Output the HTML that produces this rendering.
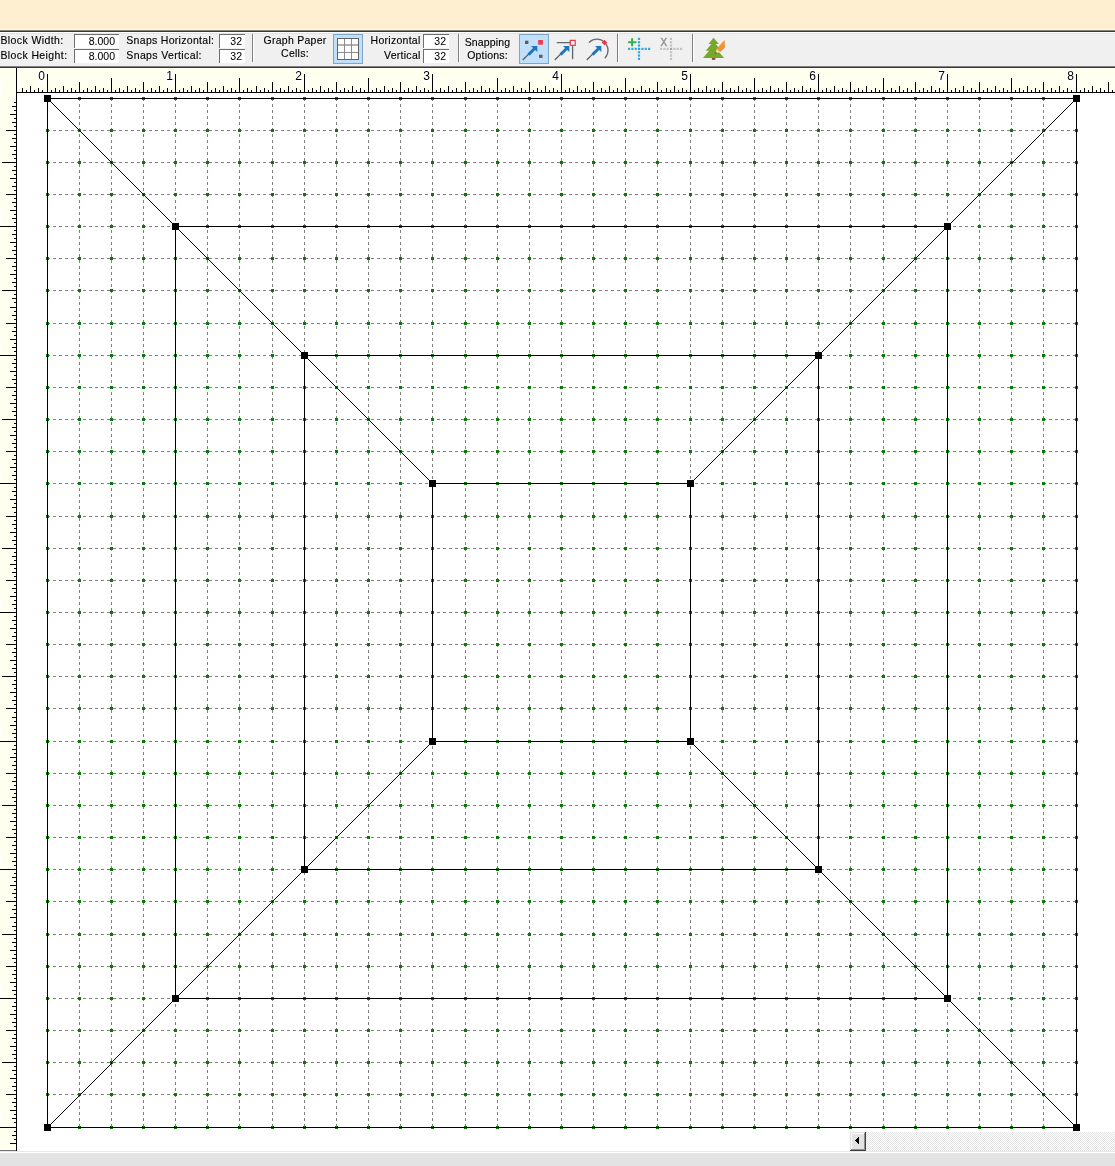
<!DOCTYPE html>
<html lang="en"><head><meta charset="utf-8"><title>Block Worktable</title><style>
html,body{margin:0;padding:0;}
body{width:1115px;height:1166px;overflow:hidden;background:#fff;position:relative;font-family:"Liberation Sans",sans-serif;color:#000;}
.abs{position:absolute;}
.band{left:0;top:0;width:1115px;height:29px;background:#fdefd0;}
.band2{left:0;top:29px;width:1115px;height:1px;background:#fff6d6;}
.l1{left:0;top:30px;width:1115px;height:1px;background:#868684;}
.l2{left:0;top:31px;width:1115px;height:1px;background:#3a3a3a;}
.l3{left:0;top:32px;width:1115px;height:1px;background:#fff;}
.tb{left:0;top:33px;width:1115px;height:33px;background:#f0f0f0;border-top:1px solid #e3e3e3;box-sizing:border-box;}
.l4{left:0;top:66px;width:1115px;height:1px;background:#828282;}
.l5{left:0;top:67px;width:1115px;height:1px;background:#383838;}
.txt{position:absolute;left:0;top:0;width:1115px;height:100px;will-change:transform;}
svg.cv{position:absolute;left:0;top:0;}
svg.ic{position:absolute;left:0;top:0;}
.t{position:absolute;white-space:nowrap;font-size:10.5px;line-height:12px;letter-spacing:0.27px;-webkit-text-stroke:0.14px #000;}
.r{text-align:right;}
.c{text-align:center;}
.in{position:absolute;background:#fff;border-top:1px solid #6e6e6e;border-left:1px solid #6e6e6e;box-sizing:border-box;height:14px;font-size:10.5px;line-height:12px;text-align:right;-webkit-text-stroke:0.05px #000;}
.sep{position:absolute;top:34px;width:1px;height:28px;background:#7e7e7e;}
.seph{position:absolute;top:34px;width:1px;height:28px;background:#fff;}
.btn{position:absolute;top:34px;width:30px;height:30px;box-sizing:border-box;background:#bfdffa;border:1px solid #7fa5c6;}
.rl{position:absolute;top:69px;width:7px;height:14px;font-size:12px;line-height:14px;text-align:right;}
</style></head><body>
<div class="abs band"></div>
<div class="abs band2"></div>
<div class="abs l1"></div>
<div class="abs l2"></div>
<div class="abs l3"></div>
<div class="abs tb"></div>
<div class="abs l4"></div>
<div class="abs l5"></div>
<svg class="cv" width="1115" height="1166" viewBox="0 0 1115 1166" shape-rendering="crispEdges">
<defs><pattern id="chk" width="2" height="2" patternUnits="userSpaceOnUse"><rect width="2" height="2" fill="#fff"/><rect width="1" height="1" fill="#e3e3e3"/><rect x="1" y="1" width="1" height="1" fill="#e3e3e3"/></pattern></defs>
<rect x="0" y="68" width="1115" height="25" fill="#fffff0"/>
<rect x="0" y="93" width="16" height="1058" fill="#fffff0"/>
<rect x="17" y="93" width="1098" height="1058" fill="#fff"/>
<path fill="#000" d="M22 88h1v4h-1zM26 90h1v2h-1zM30 86h1v6h-1zM34 90h1v2h-1zM38 88h1v4h-1zM42 90h1v2h-1zM47 74h1v18h-1zM51 90h1v2h-1zM55 88h1v4h-1zM59 90h1v2h-1zM63 86h1v6h-1zM67 90h1v2h-1zM71 88h1v4h-1zM75 90h1v2h-1zM79 82h1v10h-1zM83 90h1v2h-1zM87 88h1v4h-1zM91 90h1v2h-1zM95 86h1v6h-1zM99 90h1v2h-1zM103 88h1v4h-1zM107 90h1v2h-1zM111 78h1v14h-1zM115 90h1v2h-1zM119 88h1v4h-1zM123 90h1v2h-1zM127 86h1v6h-1zM131 90h1v2h-1zM135 88h1v4h-1zM139 90h1v2h-1zM143 82h1v10h-1zM147 90h1v2h-1zM151 88h1v4h-1zM155 90h1v2h-1zM159 86h1v6h-1zM163 90h1v2h-1zM167 88h1v4h-1zM171 90h1v2h-1zM175 74h1v18h-1zM179 90h1v2h-1zM183 88h1v4h-1zM187 90h1v2h-1zM191 86h1v6h-1zM195 90h1v2h-1zM199 88h1v4h-1zM203 90h1v2h-1zM207 82h1v10h-1zM211 90h1v2h-1zM215 88h1v4h-1zM219 90h1v2h-1zM223 86h1v6h-1zM227 90h1v2h-1zM231 88h1v4h-1zM235 90h1v2h-1zM239 78h1v14h-1zM243 90h1v2h-1zM247 88h1v4h-1zM251 90h1v2h-1zM256 86h1v6h-1zM260 90h1v2h-1zM264 88h1v4h-1zM268 90h1v2h-1zM272 82h1v10h-1zM276 90h1v2h-1zM280 88h1v4h-1zM284 90h1v2h-1zM288 86h1v6h-1zM292 90h1v2h-1zM296 88h1v4h-1zM300 90h1v2h-1zM304 74h1v18h-1zM308 90h1v2h-1zM312 88h1v4h-1zM316 90h1v2h-1zM320 86h1v6h-1zM324 90h1v2h-1zM328 88h1v4h-1zM332 90h1v2h-1zM336 82h1v10h-1zM340 90h1v2h-1zM344 88h1v4h-1zM348 90h1v2h-1zM352 86h1v6h-1zM356 90h1v2h-1zM360 88h1v4h-1zM364 90h1v2h-1zM368 78h1v14h-1zM372 90h1v2h-1zM376 88h1v4h-1zM380 90h1v2h-1zM384 86h1v6h-1zM388 90h1v2h-1zM392 88h1v4h-1zM396 90h1v2h-1zM400 82h1v10h-1zM404 90h1v2h-1zM408 88h1v4h-1zM412 90h1v2h-1zM416 86h1v6h-1zM420 90h1v2h-1zM424 88h1v4h-1zM428 90h1v2h-1zM432 74h1v18h-1zM436 90h1v2h-1zM440 88h1v4h-1zM444 90h1v2h-1zM448 86h1v6h-1zM452 90h1v2h-1zM456 88h1v4h-1zM461 90h1v2h-1zM465 82h1v10h-1zM469 90h1v2h-1zM473 88h1v4h-1zM477 90h1v2h-1zM481 86h1v6h-1zM485 90h1v2h-1zM489 88h1v4h-1zM493 90h1v2h-1zM497 78h1v14h-1zM501 90h1v2h-1zM505 88h1v4h-1zM509 90h1v2h-1zM513 86h1v6h-1zM517 90h1v2h-1zM521 88h1v4h-1zM525 90h1v2h-1zM529 82h1v10h-1zM533 90h1v2h-1zM537 88h1v4h-1zM541 90h1v2h-1zM545 86h1v6h-1zM549 90h1v2h-1zM553 88h1v4h-1zM557 90h1v2h-1zM561 74h1v18h-1zM565 90h1v2h-1zM569 88h1v4h-1zM573 90h1v2h-1zM577 86h1v6h-1zM581 90h1v2h-1zM585 88h1v4h-1zM589 90h1v2h-1zM593 82h1v10h-1zM597 90h1v2h-1zM601 88h1v4h-1zM605 90h1v2h-1zM609 86h1v6h-1zM613 90h1v2h-1zM617 88h1v4h-1zM621 90h1v2h-1zM625 78h1v14h-1zM629 90h1v2h-1zM633 88h1v4h-1zM637 90h1v2h-1zM641 86h1v6h-1zM645 90h1v2h-1zM649 88h1v4h-1zM653 90h1v2h-1zM657 82h1v10h-1zM661 90h1v2h-1zM666 88h1v4h-1zM670 90h1v2h-1zM674 86h1v6h-1zM678 90h1v2h-1zM682 88h1v4h-1zM686 90h1v2h-1zM690 74h1v18h-1zM694 90h1v2h-1zM698 88h1v4h-1zM702 90h1v2h-1zM706 86h1v6h-1zM710 90h1v2h-1zM714 88h1v4h-1zM718 90h1v2h-1zM722 82h1v10h-1zM726 90h1v2h-1zM730 88h1v4h-1zM734 90h1v2h-1zM738 86h1v6h-1zM742 90h1v2h-1zM746 88h1v4h-1zM750 90h1v2h-1zM754 78h1v14h-1zM758 90h1v2h-1zM762 88h1v4h-1zM766 90h1v2h-1zM770 86h1v6h-1zM774 90h1v2h-1zM778 88h1v4h-1zM782 90h1v2h-1zM786 82h1v10h-1zM790 90h1v2h-1zM794 88h1v4h-1zM798 90h1v2h-1zM802 86h1v6h-1zM806 90h1v2h-1zM810 88h1v4h-1zM814 90h1v2h-1zM818 74h1v18h-1zM822 90h1v2h-1zM826 88h1v4h-1zM830 90h1v2h-1zM834 86h1v6h-1zM838 90h1v2h-1zM842 88h1v4h-1zM846 90h1v2h-1zM850 82h1v10h-1zM854 90h1v2h-1zM858 88h1v4h-1zM862 90h1v2h-1zM866 86h1v6h-1zM871 90h1v2h-1zM875 88h1v4h-1zM879 90h1v2h-1zM883 78h1v14h-1zM887 90h1v2h-1zM891 88h1v4h-1zM895 90h1v2h-1zM899 86h1v6h-1zM903 90h1v2h-1zM907 88h1v4h-1zM911 90h1v2h-1zM915 82h1v10h-1zM919 90h1v2h-1zM923 88h1v4h-1zM927 90h1v2h-1zM931 86h1v6h-1zM935 90h1v2h-1zM939 88h1v4h-1zM943 90h1v2h-1zM947 74h1v18h-1zM951 90h1v2h-1zM955 88h1v4h-1zM959 90h1v2h-1zM963 86h1v6h-1zM967 90h1v2h-1zM971 88h1v4h-1zM975 90h1v2h-1zM979 82h1v10h-1zM983 90h1v2h-1zM987 88h1v4h-1zM991 90h1v2h-1zM995 86h1v6h-1zM999 90h1v2h-1zM1003 88h1v4h-1zM1007 90h1v2h-1zM1011 78h1v14h-1zM1015 90h1v2h-1zM1019 88h1v4h-1zM1023 90h1v2h-1zM1027 86h1v6h-1zM1031 90h1v2h-1zM1035 88h1v4h-1zM1039 90h1v2h-1zM1043 82h1v10h-1zM1047 90h1v2h-1zM1051 88h1v4h-1zM1055 90h1v2h-1zM1059 86h1v6h-1zM1063 90h1v2h-1zM1067 88h1v4h-1zM1071 90h1v2h-1zM1076 74h1v18h-1zM1080 90h1v2h-1zM1084 88h1v4h-1zM1088 90h1v2h-1zM1092 86h1v6h-1zM1096 90h1v2h-1zM1100 88h1v4h-1zM1104 90h1v2h-1zM1108 82h1v10h-1zM1112 90h1v2h-1zM14 102h2v1h-2zM12 106h4v1h-4zM14 110h2v1h-2zM10 114h6v1h-6zM14 118h2v1h-2zM12 122h4v1h-4zM14 126h2v1h-2zM6 130h10v1h-10zM14 134h2v1h-2zM12 138h4v1h-4zM14 142h2v1h-2zM10 146h6v1h-6zM14 150h2v1h-2zM12 154h4v1h-4zM14 158h2v1h-2zM2 162h14v1h-14zM14 166h2v1h-2zM12 170h4v1h-4zM14 174h2v1h-2zM10 178h6v1h-6zM14 182h2v1h-2zM12 186h4v1h-4zM14 190h2v1h-2zM6 194h10v1h-10zM14 198h2v1h-2zM12 202h4v1h-4zM14 206h2v1h-2zM10 210h6v1h-6zM14 214h2v1h-2zM12 218h4v1h-4zM14 222h2v1h-2zM0 226h16v1h-16zM14 230h2v1h-2zM12 234h4v1h-4zM14 238h2v1h-2zM10 242h6v1h-6zM14 246h2v1h-2zM12 250h4v1h-4zM14 254h2v1h-2zM6 258h10v1h-10zM14 262h2v1h-2zM12 266h4v1h-4zM14 270h2v1h-2zM10 274h6v1h-6zM14 278h2v1h-2zM12 282h4v1h-4zM14 286h2v1h-2zM2 290h14v1h-14zM14 294h2v1h-2zM12 298h4v1h-4zM14 302h2v1h-2zM10 307h6v1h-6zM14 311h2v1h-2zM12 315h4v1h-4zM14 319h2v1h-2zM6 323h10v1h-10zM14 327h2v1h-2zM12 331h4v1h-4zM14 335h2v1h-2zM10 339h6v1h-6zM14 343h2v1h-2zM12 347h4v1h-4zM14 351h2v1h-2zM0 355h16v1h-16zM14 359h2v1h-2zM12 363h4v1h-4zM14 367h2v1h-2zM10 371h6v1h-6zM14 375h2v1h-2zM12 379h4v1h-4zM14 383h2v1h-2zM6 387h10v1h-10zM14 391h2v1h-2zM12 395h4v1h-4zM14 399h2v1h-2zM10 403h6v1h-6zM14 407h2v1h-2zM12 411h4v1h-4zM14 415h2v1h-2zM2 419h14v1h-14zM14 423h2v1h-2zM12 427h4v1h-4zM14 431h2v1h-2zM10 435h6v1h-6zM14 439h2v1h-2zM12 443h4v1h-4zM14 447h2v1h-2zM6 451h10v1h-10zM14 455h2v1h-2zM12 459h4v1h-4zM14 463h2v1h-2zM10 467h6v1h-6zM14 471h2v1h-2zM12 475h4v1h-4zM14 479h2v1h-2zM0 483h16v1h-16zM14 487h2v1h-2zM12 491h4v1h-4zM14 495h2v1h-2zM10 499h6v1h-6zM14 503h2v1h-2zM12 507h4v1h-4zM14 512h2v1h-2zM6 516h10v1h-10zM14 520h2v1h-2zM12 524h4v1h-4zM14 528h2v1h-2zM10 532h6v1h-6zM14 536h2v1h-2zM12 540h4v1h-4zM14 544h2v1h-2zM2 548h14v1h-14zM14 552h2v1h-2zM12 556h4v1h-4zM14 560h2v1h-2zM10 564h6v1h-6zM14 568h2v1h-2zM12 572h4v1h-4zM14 576h2v1h-2zM6 580h10v1h-10zM14 584h2v1h-2zM12 588h4v1h-4zM14 592h2v1h-2zM10 596h6v1h-6zM14 600h2v1h-2zM12 604h4v1h-4zM14 608h2v1h-2zM0 612h16v1h-16zM14 616h2v1h-2zM12 620h4v1h-4zM14 624h2v1h-2zM10 628h6v1h-6zM14 632h2v1h-2zM12 636h4v1h-4zM14 640h2v1h-2zM6 644h10v1h-10zM14 648h2v1h-2zM12 652h4v1h-4zM14 656h2v1h-2zM10 660h6v1h-6zM14 664h2v1h-2zM12 668h4v1h-4zM14 672h2v1h-2zM2 676h14v1h-14zM14 680h2v1h-2zM12 684h4v1h-4zM14 688h2v1h-2zM10 692h6v1h-6zM14 696h2v1h-2zM12 700h4v1h-4zM14 704h2v1h-2zM6 708h10v1h-10zM14 712h2v1h-2zM12 717h4v1h-4zM14 721h2v1h-2zM10 725h6v1h-6zM14 729h2v1h-2zM12 733h4v1h-4zM14 737h2v1h-2zM0 741h16v1h-16zM14 745h2v1h-2zM12 749h4v1h-4zM14 753h2v1h-2zM10 757h6v1h-6zM14 761h2v1h-2zM12 765h4v1h-4zM14 769h2v1h-2zM6 773h10v1h-10zM14 777h2v1h-2zM12 781h4v1h-4zM14 785h2v1h-2zM10 789h6v1h-6zM14 793h2v1h-2zM12 797h4v1h-4zM14 801h2v1h-2zM2 805h14v1h-14zM14 809h2v1h-2zM12 813h4v1h-4zM14 817h2v1h-2zM10 821h6v1h-6zM14 825h2v1h-2zM12 829h4v1h-4zM14 833h2v1h-2zM6 837h10v1h-10zM14 841h2v1h-2zM12 845h4v1h-4zM14 849h2v1h-2zM10 853h6v1h-6zM14 857h2v1h-2zM12 861h4v1h-4zM14 865h2v1h-2zM0 869h16v1h-16zM14 873h2v1h-2zM12 877h4v1h-4zM14 881h2v1h-2zM10 885h6v1h-6zM14 889h2v1h-2zM12 893h4v1h-4zM14 897h2v1h-2zM6 901h10v1h-10zM14 905h2v1h-2zM12 909h4v1h-4zM14 913h2v1h-2zM10 917h6v1h-6zM14 922h2v1h-2zM12 926h4v1h-4zM14 930h2v1h-2zM2 934h14v1h-14zM14 938h2v1h-2zM12 942h4v1h-4zM14 946h2v1h-2zM10 950h6v1h-6zM14 954h2v1h-2zM12 958h4v1h-4zM14 962h2v1h-2zM6 966h10v1h-10zM14 970h2v1h-2zM12 974h4v1h-4zM14 978h2v1h-2zM10 982h6v1h-6zM14 986h2v1h-2zM12 990h4v1h-4zM14 994h2v1h-2zM0 998h16v1h-16zM14 1002h2v1h-2zM12 1006h4v1h-4zM14 1010h2v1h-2zM10 1014h6v1h-6zM14 1018h2v1h-2zM12 1022h4v1h-4zM14 1026h2v1h-2zM6 1030h10v1h-10zM14 1034h2v1h-2zM12 1038h4v1h-4zM14 1042h2v1h-2zM10 1046h6v1h-6zM14 1050h2v1h-2zM12 1054h4v1h-4zM14 1058h2v1h-2zM2 1062h14v1h-14zM14 1066h2v1h-2zM12 1070h4v1h-4zM14 1074h2v1h-2zM10 1078h6v1h-6zM14 1082h2v1h-2zM12 1086h4v1h-4zM14 1090h2v1h-2zM6 1094h10v1h-10zM14 1098h2v1h-2zM12 1102h4v1h-4zM14 1106h2v1h-2zM10 1110h6v1h-6zM14 1114h2v1h-2zM12 1118h4v1h-4zM14 1122h2v1h-2zM0 1127h16v1h-16zM14 1131h2v1h-2zM12 1135h4v1h-4zM14 1139h2v1h-2zM10 1143h6v1h-6z"/>
<rect x="16" y="92" width="1099" height="1" fill="#000"/>
<rect x="16" y="68" width="1" height="1083" fill="#000"/>
<rect x="0" y="1150" width="16" height="1" fill="#707070"/>
<rect x="38" y="69" width="7" height="14" fill="#fff"/>
<rect x="166" y="69" width="7" height="14" fill="#fff"/>
<rect x="295" y="69" width="7" height="14" fill="#fff"/>
<rect x="423" y="69" width="7" height="14" fill="#fff"/>
<rect x="552" y="69" width="7" height="14" fill="#fff"/>
<rect x="681" y="69" width="7" height="14" fill="#fff"/>
<rect x="809" y="69" width="7" height="14" fill="#fff"/>
<rect x="938" y="69" width="7" height="14" fill="#fff"/>
<rect x="1067" y="69" width="7" height="14" fill="#fff"/>
<rect x="0" y="82" width="1" height="14" fill="#fff"/>
<rect x="0" y="210" width="1" height="14" fill="#fff"/>
<rect x="0" y="339" width="1" height="14" fill="#fff"/>
<rect x="0" y="467" width="1" height="14" fill="#fff"/>
<rect x="0" y="596" width="1" height="14" fill="#fff"/>
<rect x="0" y="725" width="1" height="14" fill="#fff"/>
<rect x="0" y="853" width="1" height="14" fill="#fff"/>
<rect x="0" y="982" width="1" height="14" fill="#fff"/>
<rect x="0" y="1111" width="1" height="14" fill="#fff"/>
<rect x="0" y="98" width="16" height="1" fill="#fffff8"/>
<path fill="none" stroke="#808080" stroke-width="1" stroke-dasharray="3 3" d="M79.5 98V1128M47 130.5H1077M111.5 98V1128M47 162.5H1077M143.5 98V1128M47 194.5H1077M175.5 98V1128M47 226.5H1077M207.5 98V1128M47 258.5H1077M239.5 98V1128M47 290.5H1077M272.5 98V1128M47 323.5H1077M304.5 98V1128M47 355.5H1077M336.5 98V1128M47 387.5H1077M368.5 98V1128M47 419.5H1077M400.5 98V1128M47 451.5H1077M432.5 98V1128M47 483.5H1077M465.5 98V1128M47 516.5H1077M497.5 98V1128M47 548.5H1077M529.5 98V1128M47 580.5H1077M561.5 98V1128M47 612.5H1077M593.5 98V1128M47 644.5H1077M625.5 98V1128M47 676.5H1077M657.5 98V1128M47 708.5H1077M690.5 98V1128M47 741.5H1077M722.5 98V1128M47 773.5H1077M754.5 98V1128M47 805.5H1077M786.5 98V1128M47 837.5H1077M818.5 98V1128M47 869.5H1077M850.5 98V1128M47 901.5H1077M883.5 98V1128M47 934.5H1077M915.5 98V1128M47 966.5H1077M947.5 98V1128M47 998.5H1077M979.5 98V1128M47 1030.5H1077M1011.5 98V1128M47 1062.5H1077M1043.5 98V1128M47 1094.5H1077"/>
<path fill="#077a07" d="M46 129h3v3h-3zM46 161h3v3h-3zM46 193h3v3h-3zM46 225h3v3h-3zM46 257h3v3h-3zM46 289h3v3h-3zM46 322h3v3h-3zM46 354h3v3h-3zM46 386h3v3h-3zM46 418h3v3h-3zM46 450h3v3h-3zM46 482h3v3h-3zM46 515h3v3h-3zM46 547h3v3h-3zM46 579h3v3h-3zM46 611h3v3h-3zM46 643h3v3h-3zM46 675h3v3h-3zM46 707h3v3h-3zM46 740h3v3h-3zM46 772h3v3h-3zM46 804h3v3h-3zM46 836h3v3h-3zM46 868h3v3h-3zM46 900h3v3h-3zM46 933h3v3h-3zM46 965h3v3h-3zM46 997h3v3h-3zM46 1029h3v3h-3zM46 1061h3v3h-3zM46 1093h3v3h-3zM78 97h3v3h-3zM78 129h3v3h-3zM78 161h3v3h-3zM78 193h3v3h-3zM78 225h3v3h-3zM78 257h3v3h-3zM78 289h3v3h-3zM78 322h3v3h-3zM78 354h3v3h-3zM78 386h3v3h-3zM78 418h3v3h-3zM78 450h3v3h-3zM78 482h3v3h-3zM78 515h3v3h-3zM78 547h3v3h-3zM78 579h3v3h-3zM78 611h3v3h-3zM78 643h3v3h-3zM78 675h3v3h-3zM78 707h3v3h-3zM78 740h3v3h-3zM78 772h3v3h-3zM78 804h3v3h-3zM78 836h3v3h-3zM78 868h3v3h-3zM78 900h3v3h-3zM78 933h3v3h-3zM78 965h3v3h-3zM78 997h3v3h-3zM78 1029h3v3h-3zM78 1061h3v3h-3zM78 1093h3v3h-3zM78 1126h3v3h-3zM110 97h3v3h-3zM110 129h3v3h-3zM110 161h3v3h-3zM110 193h3v3h-3zM110 225h3v3h-3zM110 257h3v3h-3zM110 289h3v3h-3zM110 322h3v3h-3zM110 354h3v3h-3zM110 386h3v3h-3zM110 418h3v3h-3zM110 450h3v3h-3zM110 482h3v3h-3zM110 515h3v3h-3zM110 547h3v3h-3zM110 579h3v3h-3zM110 611h3v3h-3zM110 643h3v3h-3zM110 675h3v3h-3zM110 707h3v3h-3zM110 740h3v3h-3zM110 772h3v3h-3zM110 804h3v3h-3zM110 836h3v3h-3zM110 868h3v3h-3zM110 900h3v3h-3zM110 933h3v3h-3zM110 965h3v3h-3zM110 997h3v3h-3zM110 1029h3v3h-3zM110 1061h3v3h-3zM110 1093h3v3h-3zM110 1126h3v3h-3zM142 97h3v3h-3zM142 129h3v3h-3zM142 161h3v3h-3zM142 193h3v3h-3zM142 225h3v3h-3zM142 257h3v3h-3zM142 289h3v3h-3zM142 322h3v3h-3zM142 354h3v3h-3zM142 386h3v3h-3zM142 418h3v3h-3zM142 450h3v3h-3zM142 482h3v3h-3zM142 515h3v3h-3zM142 547h3v3h-3zM142 579h3v3h-3zM142 611h3v3h-3zM142 643h3v3h-3zM142 675h3v3h-3zM142 707h3v3h-3zM142 740h3v3h-3zM142 772h3v3h-3zM142 804h3v3h-3zM142 836h3v3h-3zM142 868h3v3h-3zM142 900h3v3h-3zM142 933h3v3h-3zM142 965h3v3h-3zM142 997h3v3h-3zM142 1029h3v3h-3zM142 1061h3v3h-3zM142 1093h3v3h-3zM142 1126h3v3h-3zM174 97h3v3h-3zM174 129h3v3h-3zM174 161h3v3h-3zM174 193h3v3h-3zM174 225h3v3h-3zM174 257h3v3h-3zM174 289h3v3h-3zM174 322h3v3h-3zM174 354h3v3h-3zM174 386h3v3h-3zM174 418h3v3h-3zM174 450h3v3h-3zM174 482h3v3h-3zM174 515h3v3h-3zM174 547h3v3h-3zM174 579h3v3h-3zM174 611h3v3h-3zM174 643h3v3h-3zM174 675h3v3h-3zM174 707h3v3h-3zM174 740h3v3h-3zM174 772h3v3h-3zM174 804h3v3h-3zM174 836h3v3h-3zM174 868h3v3h-3zM174 900h3v3h-3zM174 933h3v3h-3zM174 965h3v3h-3zM174 997h3v3h-3zM174 1029h3v3h-3zM174 1061h3v3h-3zM174 1093h3v3h-3zM174 1126h3v3h-3zM206 97h3v3h-3zM206 129h3v3h-3zM206 161h3v3h-3zM206 193h3v3h-3zM206 225h3v3h-3zM206 257h3v3h-3zM206 289h3v3h-3zM206 322h3v3h-3zM206 354h3v3h-3zM206 386h3v3h-3zM206 418h3v3h-3zM206 450h3v3h-3zM206 482h3v3h-3zM206 515h3v3h-3zM206 547h3v3h-3zM206 579h3v3h-3zM206 611h3v3h-3zM206 643h3v3h-3zM206 675h3v3h-3zM206 707h3v3h-3zM206 740h3v3h-3zM206 772h3v3h-3zM206 804h3v3h-3zM206 836h3v3h-3zM206 868h3v3h-3zM206 900h3v3h-3zM206 933h3v3h-3zM206 965h3v3h-3zM206 997h3v3h-3zM206 1029h3v3h-3zM206 1061h3v3h-3zM206 1093h3v3h-3zM206 1126h3v3h-3zM238 97h3v3h-3zM238 129h3v3h-3zM238 161h3v3h-3zM238 193h3v3h-3zM238 225h3v3h-3zM238 257h3v3h-3zM238 289h3v3h-3zM238 322h3v3h-3zM238 354h3v3h-3zM238 386h3v3h-3zM238 418h3v3h-3zM238 450h3v3h-3zM238 482h3v3h-3zM238 515h3v3h-3zM238 547h3v3h-3zM238 579h3v3h-3zM238 611h3v3h-3zM238 643h3v3h-3zM238 675h3v3h-3zM238 707h3v3h-3zM238 740h3v3h-3zM238 772h3v3h-3zM238 804h3v3h-3zM238 836h3v3h-3zM238 868h3v3h-3zM238 900h3v3h-3zM238 933h3v3h-3zM238 965h3v3h-3zM238 997h3v3h-3zM238 1029h3v3h-3zM238 1061h3v3h-3zM238 1093h3v3h-3zM238 1126h3v3h-3zM271 97h3v3h-3zM271 129h3v3h-3zM271 161h3v3h-3zM271 193h3v3h-3zM271 225h3v3h-3zM271 257h3v3h-3zM271 289h3v3h-3zM271 322h3v3h-3zM271 354h3v3h-3zM271 386h3v3h-3zM271 418h3v3h-3zM271 450h3v3h-3zM271 482h3v3h-3zM271 515h3v3h-3zM271 547h3v3h-3zM271 579h3v3h-3zM271 611h3v3h-3zM271 643h3v3h-3zM271 675h3v3h-3zM271 707h3v3h-3zM271 740h3v3h-3zM271 772h3v3h-3zM271 804h3v3h-3zM271 836h3v3h-3zM271 868h3v3h-3zM271 900h3v3h-3zM271 933h3v3h-3zM271 965h3v3h-3zM271 997h3v3h-3zM271 1029h3v3h-3zM271 1061h3v3h-3zM271 1093h3v3h-3zM271 1126h3v3h-3zM303 97h3v3h-3zM303 129h3v3h-3zM303 161h3v3h-3zM303 193h3v3h-3zM303 225h3v3h-3zM303 257h3v3h-3zM303 289h3v3h-3zM303 322h3v3h-3zM303 354h3v3h-3zM303 386h3v3h-3zM303 418h3v3h-3zM303 450h3v3h-3zM303 482h3v3h-3zM303 515h3v3h-3zM303 547h3v3h-3zM303 579h3v3h-3zM303 611h3v3h-3zM303 643h3v3h-3zM303 675h3v3h-3zM303 707h3v3h-3zM303 740h3v3h-3zM303 772h3v3h-3zM303 804h3v3h-3zM303 836h3v3h-3zM303 868h3v3h-3zM303 900h3v3h-3zM303 933h3v3h-3zM303 965h3v3h-3zM303 997h3v3h-3zM303 1029h3v3h-3zM303 1061h3v3h-3zM303 1093h3v3h-3zM303 1126h3v3h-3zM335 97h3v3h-3zM335 129h3v3h-3zM335 161h3v3h-3zM335 193h3v3h-3zM335 225h3v3h-3zM335 257h3v3h-3zM335 289h3v3h-3zM335 322h3v3h-3zM335 354h3v3h-3zM335 386h3v3h-3zM335 418h3v3h-3zM335 450h3v3h-3zM335 482h3v3h-3zM335 515h3v3h-3zM335 547h3v3h-3zM335 579h3v3h-3zM335 611h3v3h-3zM335 643h3v3h-3zM335 675h3v3h-3zM335 707h3v3h-3zM335 740h3v3h-3zM335 772h3v3h-3zM335 804h3v3h-3zM335 836h3v3h-3zM335 868h3v3h-3zM335 900h3v3h-3zM335 933h3v3h-3zM335 965h3v3h-3zM335 997h3v3h-3zM335 1029h3v3h-3zM335 1061h3v3h-3zM335 1093h3v3h-3zM335 1126h3v3h-3zM367 97h3v3h-3zM367 129h3v3h-3zM367 161h3v3h-3zM367 193h3v3h-3zM367 225h3v3h-3zM367 257h3v3h-3zM367 289h3v3h-3zM367 322h3v3h-3zM367 354h3v3h-3zM367 386h3v3h-3zM367 418h3v3h-3zM367 450h3v3h-3zM367 482h3v3h-3zM367 515h3v3h-3zM367 547h3v3h-3zM367 579h3v3h-3zM367 611h3v3h-3zM367 643h3v3h-3zM367 675h3v3h-3zM367 707h3v3h-3zM367 740h3v3h-3zM367 772h3v3h-3zM367 804h3v3h-3zM367 836h3v3h-3zM367 868h3v3h-3zM367 900h3v3h-3zM367 933h3v3h-3zM367 965h3v3h-3zM367 997h3v3h-3zM367 1029h3v3h-3zM367 1061h3v3h-3zM367 1093h3v3h-3zM367 1126h3v3h-3zM399 97h3v3h-3zM399 129h3v3h-3zM399 161h3v3h-3zM399 193h3v3h-3zM399 225h3v3h-3zM399 257h3v3h-3zM399 289h3v3h-3zM399 322h3v3h-3zM399 354h3v3h-3zM399 386h3v3h-3zM399 418h3v3h-3zM399 450h3v3h-3zM399 482h3v3h-3zM399 515h3v3h-3zM399 547h3v3h-3zM399 579h3v3h-3zM399 611h3v3h-3zM399 643h3v3h-3zM399 675h3v3h-3zM399 707h3v3h-3zM399 740h3v3h-3zM399 772h3v3h-3zM399 804h3v3h-3zM399 836h3v3h-3zM399 868h3v3h-3zM399 900h3v3h-3zM399 933h3v3h-3zM399 965h3v3h-3zM399 997h3v3h-3zM399 1029h3v3h-3zM399 1061h3v3h-3zM399 1093h3v3h-3zM399 1126h3v3h-3zM431 97h3v3h-3zM431 129h3v3h-3zM431 161h3v3h-3zM431 193h3v3h-3zM431 225h3v3h-3zM431 257h3v3h-3zM431 289h3v3h-3zM431 322h3v3h-3zM431 354h3v3h-3zM431 386h3v3h-3zM431 418h3v3h-3zM431 450h3v3h-3zM431 482h3v3h-3zM431 515h3v3h-3zM431 547h3v3h-3zM431 579h3v3h-3zM431 611h3v3h-3zM431 643h3v3h-3zM431 675h3v3h-3zM431 707h3v3h-3zM431 740h3v3h-3zM431 772h3v3h-3zM431 804h3v3h-3zM431 836h3v3h-3zM431 868h3v3h-3zM431 900h3v3h-3zM431 933h3v3h-3zM431 965h3v3h-3zM431 997h3v3h-3zM431 1029h3v3h-3zM431 1061h3v3h-3zM431 1093h3v3h-3zM431 1126h3v3h-3zM464 97h3v3h-3zM464 129h3v3h-3zM464 161h3v3h-3zM464 193h3v3h-3zM464 225h3v3h-3zM464 257h3v3h-3zM464 289h3v3h-3zM464 322h3v3h-3zM464 354h3v3h-3zM464 386h3v3h-3zM464 418h3v3h-3zM464 450h3v3h-3zM464 482h3v3h-3zM464 515h3v3h-3zM464 547h3v3h-3zM464 579h3v3h-3zM464 611h3v3h-3zM464 643h3v3h-3zM464 675h3v3h-3zM464 707h3v3h-3zM464 740h3v3h-3zM464 772h3v3h-3zM464 804h3v3h-3zM464 836h3v3h-3zM464 868h3v3h-3zM464 900h3v3h-3zM464 933h3v3h-3zM464 965h3v3h-3zM464 997h3v3h-3zM464 1029h3v3h-3zM464 1061h3v3h-3zM464 1093h3v3h-3zM464 1126h3v3h-3zM496 97h3v3h-3zM496 129h3v3h-3zM496 161h3v3h-3zM496 193h3v3h-3zM496 225h3v3h-3zM496 257h3v3h-3zM496 289h3v3h-3zM496 322h3v3h-3zM496 354h3v3h-3zM496 386h3v3h-3zM496 418h3v3h-3zM496 450h3v3h-3zM496 482h3v3h-3zM496 515h3v3h-3zM496 547h3v3h-3zM496 579h3v3h-3zM496 611h3v3h-3zM496 643h3v3h-3zM496 675h3v3h-3zM496 707h3v3h-3zM496 740h3v3h-3zM496 772h3v3h-3zM496 804h3v3h-3zM496 836h3v3h-3zM496 868h3v3h-3zM496 900h3v3h-3zM496 933h3v3h-3zM496 965h3v3h-3zM496 997h3v3h-3zM496 1029h3v3h-3zM496 1061h3v3h-3zM496 1093h3v3h-3zM496 1126h3v3h-3zM528 97h3v3h-3zM528 129h3v3h-3zM528 161h3v3h-3zM528 193h3v3h-3zM528 225h3v3h-3zM528 257h3v3h-3zM528 289h3v3h-3zM528 322h3v3h-3zM528 354h3v3h-3zM528 386h3v3h-3zM528 418h3v3h-3zM528 450h3v3h-3zM528 482h3v3h-3zM528 515h3v3h-3zM528 547h3v3h-3zM528 579h3v3h-3zM528 611h3v3h-3zM528 643h3v3h-3zM528 675h3v3h-3zM528 707h3v3h-3zM528 740h3v3h-3zM528 772h3v3h-3zM528 804h3v3h-3zM528 836h3v3h-3zM528 868h3v3h-3zM528 900h3v3h-3zM528 933h3v3h-3zM528 965h3v3h-3zM528 997h3v3h-3zM528 1029h3v3h-3zM528 1061h3v3h-3zM528 1093h3v3h-3zM528 1126h3v3h-3zM560 97h3v3h-3zM560 129h3v3h-3zM560 161h3v3h-3zM560 193h3v3h-3zM560 225h3v3h-3zM560 257h3v3h-3zM560 289h3v3h-3zM560 322h3v3h-3zM560 354h3v3h-3zM560 386h3v3h-3zM560 418h3v3h-3zM560 450h3v3h-3zM560 482h3v3h-3zM560 515h3v3h-3zM560 547h3v3h-3zM560 579h3v3h-3zM560 611h3v3h-3zM560 643h3v3h-3zM560 675h3v3h-3zM560 707h3v3h-3zM560 740h3v3h-3zM560 772h3v3h-3zM560 804h3v3h-3zM560 836h3v3h-3zM560 868h3v3h-3zM560 900h3v3h-3zM560 933h3v3h-3zM560 965h3v3h-3zM560 997h3v3h-3zM560 1029h3v3h-3zM560 1061h3v3h-3zM560 1093h3v3h-3zM560 1126h3v3h-3zM592 97h3v3h-3zM592 129h3v3h-3zM592 161h3v3h-3zM592 193h3v3h-3zM592 225h3v3h-3zM592 257h3v3h-3zM592 289h3v3h-3zM592 322h3v3h-3zM592 354h3v3h-3zM592 386h3v3h-3zM592 418h3v3h-3zM592 450h3v3h-3zM592 482h3v3h-3zM592 515h3v3h-3zM592 547h3v3h-3zM592 579h3v3h-3zM592 611h3v3h-3zM592 643h3v3h-3zM592 675h3v3h-3zM592 707h3v3h-3zM592 740h3v3h-3zM592 772h3v3h-3zM592 804h3v3h-3zM592 836h3v3h-3zM592 868h3v3h-3zM592 900h3v3h-3zM592 933h3v3h-3zM592 965h3v3h-3zM592 997h3v3h-3zM592 1029h3v3h-3zM592 1061h3v3h-3zM592 1093h3v3h-3zM592 1126h3v3h-3zM624 97h3v3h-3zM624 129h3v3h-3zM624 161h3v3h-3zM624 193h3v3h-3zM624 225h3v3h-3zM624 257h3v3h-3zM624 289h3v3h-3zM624 322h3v3h-3zM624 354h3v3h-3zM624 386h3v3h-3zM624 418h3v3h-3zM624 450h3v3h-3zM624 482h3v3h-3zM624 515h3v3h-3zM624 547h3v3h-3zM624 579h3v3h-3zM624 611h3v3h-3zM624 643h3v3h-3zM624 675h3v3h-3zM624 707h3v3h-3zM624 740h3v3h-3zM624 772h3v3h-3zM624 804h3v3h-3zM624 836h3v3h-3zM624 868h3v3h-3zM624 900h3v3h-3zM624 933h3v3h-3zM624 965h3v3h-3zM624 997h3v3h-3zM624 1029h3v3h-3zM624 1061h3v3h-3zM624 1093h3v3h-3zM624 1126h3v3h-3zM656 97h3v3h-3zM656 129h3v3h-3zM656 161h3v3h-3zM656 193h3v3h-3zM656 225h3v3h-3zM656 257h3v3h-3zM656 289h3v3h-3zM656 322h3v3h-3zM656 354h3v3h-3zM656 386h3v3h-3zM656 418h3v3h-3zM656 450h3v3h-3zM656 482h3v3h-3zM656 515h3v3h-3zM656 547h3v3h-3zM656 579h3v3h-3zM656 611h3v3h-3zM656 643h3v3h-3zM656 675h3v3h-3zM656 707h3v3h-3zM656 740h3v3h-3zM656 772h3v3h-3zM656 804h3v3h-3zM656 836h3v3h-3zM656 868h3v3h-3zM656 900h3v3h-3zM656 933h3v3h-3zM656 965h3v3h-3zM656 997h3v3h-3zM656 1029h3v3h-3zM656 1061h3v3h-3zM656 1093h3v3h-3zM656 1126h3v3h-3zM689 97h3v3h-3zM689 129h3v3h-3zM689 161h3v3h-3zM689 193h3v3h-3zM689 225h3v3h-3zM689 257h3v3h-3zM689 289h3v3h-3zM689 322h3v3h-3zM689 354h3v3h-3zM689 386h3v3h-3zM689 418h3v3h-3zM689 450h3v3h-3zM689 482h3v3h-3zM689 515h3v3h-3zM689 547h3v3h-3zM689 579h3v3h-3zM689 611h3v3h-3zM689 643h3v3h-3zM689 675h3v3h-3zM689 707h3v3h-3zM689 740h3v3h-3zM689 772h3v3h-3zM689 804h3v3h-3zM689 836h3v3h-3zM689 868h3v3h-3zM689 900h3v3h-3zM689 933h3v3h-3zM689 965h3v3h-3zM689 997h3v3h-3zM689 1029h3v3h-3zM689 1061h3v3h-3zM689 1093h3v3h-3zM689 1126h3v3h-3zM721 97h3v3h-3zM721 129h3v3h-3zM721 161h3v3h-3zM721 193h3v3h-3zM721 225h3v3h-3zM721 257h3v3h-3zM721 289h3v3h-3zM721 322h3v3h-3zM721 354h3v3h-3zM721 386h3v3h-3zM721 418h3v3h-3zM721 450h3v3h-3zM721 482h3v3h-3zM721 515h3v3h-3zM721 547h3v3h-3zM721 579h3v3h-3zM721 611h3v3h-3zM721 643h3v3h-3zM721 675h3v3h-3zM721 707h3v3h-3zM721 740h3v3h-3zM721 772h3v3h-3zM721 804h3v3h-3zM721 836h3v3h-3zM721 868h3v3h-3zM721 900h3v3h-3zM721 933h3v3h-3zM721 965h3v3h-3zM721 997h3v3h-3zM721 1029h3v3h-3zM721 1061h3v3h-3zM721 1093h3v3h-3zM721 1126h3v3h-3zM753 97h3v3h-3zM753 129h3v3h-3zM753 161h3v3h-3zM753 193h3v3h-3zM753 225h3v3h-3zM753 257h3v3h-3zM753 289h3v3h-3zM753 322h3v3h-3zM753 354h3v3h-3zM753 386h3v3h-3zM753 418h3v3h-3zM753 450h3v3h-3zM753 482h3v3h-3zM753 515h3v3h-3zM753 547h3v3h-3zM753 579h3v3h-3zM753 611h3v3h-3zM753 643h3v3h-3zM753 675h3v3h-3zM753 707h3v3h-3zM753 740h3v3h-3zM753 772h3v3h-3zM753 804h3v3h-3zM753 836h3v3h-3zM753 868h3v3h-3zM753 900h3v3h-3zM753 933h3v3h-3zM753 965h3v3h-3zM753 997h3v3h-3zM753 1029h3v3h-3zM753 1061h3v3h-3zM753 1093h3v3h-3zM753 1126h3v3h-3zM785 97h3v3h-3zM785 129h3v3h-3zM785 161h3v3h-3zM785 193h3v3h-3zM785 225h3v3h-3zM785 257h3v3h-3zM785 289h3v3h-3zM785 322h3v3h-3zM785 354h3v3h-3zM785 386h3v3h-3zM785 418h3v3h-3zM785 450h3v3h-3zM785 482h3v3h-3zM785 515h3v3h-3zM785 547h3v3h-3zM785 579h3v3h-3zM785 611h3v3h-3zM785 643h3v3h-3zM785 675h3v3h-3zM785 707h3v3h-3zM785 740h3v3h-3zM785 772h3v3h-3zM785 804h3v3h-3zM785 836h3v3h-3zM785 868h3v3h-3zM785 900h3v3h-3zM785 933h3v3h-3zM785 965h3v3h-3zM785 997h3v3h-3zM785 1029h3v3h-3zM785 1061h3v3h-3zM785 1093h3v3h-3zM785 1126h3v3h-3zM817 97h3v3h-3zM817 129h3v3h-3zM817 161h3v3h-3zM817 193h3v3h-3zM817 225h3v3h-3zM817 257h3v3h-3zM817 289h3v3h-3zM817 322h3v3h-3zM817 354h3v3h-3zM817 386h3v3h-3zM817 418h3v3h-3zM817 450h3v3h-3zM817 482h3v3h-3zM817 515h3v3h-3zM817 547h3v3h-3zM817 579h3v3h-3zM817 611h3v3h-3zM817 643h3v3h-3zM817 675h3v3h-3zM817 707h3v3h-3zM817 740h3v3h-3zM817 772h3v3h-3zM817 804h3v3h-3zM817 836h3v3h-3zM817 868h3v3h-3zM817 900h3v3h-3zM817 933h3v3h-3zM817 965h3v3h-3zM817 997h3v3h-3zM817 1029h3v3h-3zM817 1061h3v3h-3zM817 1093h3v3h-3zM817 1126h3v3h-3zM849 97h3v3h-3zM849 129h3v3h-3zM849 161h3v3h-3zM849 193h3v3h-3zM849 225h3v3h-3zM849 257h3v3h-3zM849 289h3v3h-3zM849 322h3v3h-3zM849 354h3v3h-3zM849 386h3v3h-3zM849 418h3v3h-3zM849 450h3v3h-3zM849 482h3v3h-3zM849 515h3v3h-3zM849 547h3v3h-3zM849 579h3v3h-3zM849 611h3v3h-3zM849 643h3v3h-3zM849 675h3v3h-3zM849 707h3v3h-3zM849 740h3v3h-3zM849 772h3v3h-3zM849 804h3v3h-3zM849 836h3v3h-3zM849 868h3v3h-3zM849 900h3v3h-3zM849 933h3v3h-3zM849 965h3v3h-3zM849 997h3v3h-3zM849 1029h3v3h-3zM849 1061h3v3h-3zM849 1093h3v3h-3zM849 1126h3v3h-3zM882 97h3v3h-3zM882 129h3v3h-3zM882 161h3v3h-3zM882 193h3v3h-3zM882 225h3v3h-3zM882 257h3v3h-3zM882 289h3v3h-3zM882 322h3v3h-3zM882 354h3v3h-3zM882 386h3v3h-3zM882 418h3v3h-3zM882 450h3v3h-3zM882 482h3v3h-3zM882 515h3v3h-3zM882 547h3v3h-3zM882 579h3v3h-3zM882 611h3v3h-3zM882 643h3v3h-3zM882 675h3v3h-3zM882 707h3v3h-3zM882 740h3v3h-3zM882 772h3v3h-3zM882 804h3v3h-3zM882 836h3v3h-3zM882 868h3v3h-3zM882 900h3v3h-3zM882 933h3v3h-3zM882 965h3v3h-3zM882 997h3v3h-3zM882 1029h3v3h-3zM882 1061h3v3h-3zM882 1093h3v3h-3zM882 1126h3v3h-3zM914 97h3v3h-3zM914 129h3v3h-3zM914 161h3v3h-3zM914 193h3v3h-3zM914 225h3v3h-3zM914 257h3v3h-3zM914 289h3v3h-3zM914 322h3v3h-3zM914 354h3v3h-3zM914 386h3v3h-3zM914 418h3v3h-3zM914 450h3v3h-3zM914 482h3v3h-3zM914 515h3v3h-3zM914 547h3v3h-3zM914 579h3v3h-3zM914 611h3v3h-3zM914 643h3v3h-3zM914 675h3v3h-3zM914 707h3v3h-3zM914 740h3v3h-3zM914 772h3v3h-3zM914 804h3v3h-3zM914 836h3v3h-3zM914 868h3v3h-3zM914 900h3v3h-3zM914 933h3v3h-3zM914 965h3v3h-3zM914 997h3v3h-3zM914 1029h3v3h-3zM914 1061h3v3h-3zM914 1093h3v3h-3zM914 1126h3v3h-3zM946 97h3v3h-3zM946 129h3v3h-3zM946 161h3v3h-3zM946 193h3v3h-3zM946 225h3v3h-3zM946 257h3v3h-3zM946 289h3v3h-3zM946 322h3v3h-3zM946 354h3v3h-3zM946 386h3v3h-3zM946 418h3v3h-3zM946 450h3v3h-3zM946 482h3v3h-3zM946 515h3v3h-3zM946 547h3v3h-3zM946 579h3v3h-3zM946 611h3v3h-3zM946 643h3v3h-3zM946 675h3v3h-3zM946 707h3v3h-3zM946 740h3v3h-3zM946 772h3v3h-3zM946 804h3v3h-3zM946 836h3v3h-3zM946 868h3v3h-3zM946 900h3v3h-3zM946 933h3v3h-3zM946 965h3v3h-3zM946 997h3v3h-3zM946 1029h3v3h-3zM946 1061h3v3h-3zM946 1093h3v3h-3zM946 1126h3v3h-3zM978 97h3v3h-3zM978 129h3v3h-3zM978 161h3v3h-3zM978 193h3v3h-3zM978 225h3v3h-3zM978 257h3v3h-3zM978 289h3v3h-3zM978 322h3v3h-3zM978 354h3v3h-3zM978 386h3v3h-3zM978 418h3v3h-3zM978 450h3v3h-3zM978 482h3v3h-3zM978 515h3v3h-3zM978 547h3v3h-3zM978 579h3v3h-3zM978 611h3v3h-3zM978 643h3v3h-3zM978 675h3v3h-3zM978 707h3v3h-3zM978 740h3v3h-3zM978 772h3v3h-3zM978 804h3v3h-3zM978 836h3v3h-3zM978 868h3v3h-3zM978 900h3v3h-3zM978 933h3v3h-3zM978 965h3v3h-3zM978 997h3v3h-3zM978 1029h3v3h-3zM978 1061h3v3h-3zM978 1093h3v3h-3zM978 1126h3v3h-3zM1010 97h3v3h-3zM1010 129h3v3h-3zM1010 161h3v3h-3zM1010 193h3v3h-3zM1010 225h3v3h-3zM1010 257h3v3h-3zM1010 289h3v3h-3zM1010 322h3v3h-3zM1010 354h3v3h-3zM1010 386h3v3h-3zM1010 418h3v3h-3zM1010 450h3v3h-3zM1010 482h3v3h-3zM1010 515h3v3h-3zM1010 547h3v3h-3zM1010 579h3v3h-3zM1010 611h3v3h-3zM1010 643h3v3h-3zM1010 675h3v3h-3zM1010 707h3v3h-3zM1010 740h3v3h-3zM1010 772h3v3h-3zM1010 804h3v3h-3zM1010 836h3v3h-3zM1010 868h3v3h-3zM1010 900h3v3h-3zM1010 933h3v3h-3zM1010 965h3v3h-3zM1010 997h3v3h-3zM1010 1029h3v3h-3zM1010 1061h3v3h-3zM1010 1093h3v3h-3zM1010 1126h3v3h-3zM1042 97h3v3h-3zM1042 129h3v3h-3zM1042 161h3v3h-3zM1042 193h3v3h-3zM1042 225h3v3h-3zM1042 257h3v3h-3zM1042 289h3v3h-3zM1042 322h3v3h-3zM1042 354h3v3h-3zM1042 386h3v3h-3zM1042 418h3v3h-3zM1042 450h3v3h-3zM1042 482h3v3h-3zM1042 515h3v3h-3zM1042 547h3v3h-3zM1042 579h3v3h-3zM1042 611h3v3h-3zM1042 643h3v3h-3zM1042 675h3v3h-3zM1042 707h3v3h-3zM1042 740h3v3h-3zM1042 772h3v3h-3zM1042 804h3v3h-3zM1042 836h3v3h-3zM1042 868h3v3h-3zM1042 900h3v3h-3zM1042 933h3v3h-3zM1042 965h3v3h-3zM1042 997h3v3h-3zM1042 1029h3v3h-3zM1042 1061h3v3h-3zM1042 1093h3v3h-3zM1042 1126h3v3h-3zM1075 129h3v3h-3zM1075 161h3v3h-3zM1075 193h3v3h-3zM1075 225h3v3h-3zM1075 257h3v3h-3zM1075 289h3v3h-3zM1075 322h3v3h-3zM1075 354h3v3h-3zM1075 386h3v3h-3zM1075 418h3v3h-3zM1075 450h3v3h-3zM1075 482h3v3h-3zM1075 515h3v3h-3zM1075 547h3v3h-3zM1075 579h3v3h-3zM1075 611h3v3h-3zM1075 643h3v3h-3zM1075 675h3v3h-3zM1075 707h3v3h-3zM1075 740h3v3h-3zM1075 772h3v3h-3zM1075 804h3v3h-3zM1075 836h3v3h-3zM1075 868h3v3h-3zM1075 900h3v3h-3zM1075 933h3v3h-3zM1075 965h3v3h-3zM1075 997h3v3h-3zM1075 1029h3v3h-3zM1075 1061h3v3h-3zM1075 1093h3v3h-3z"/>
<path fill="none" stroke="#000" stroke-width="1" d="M47.5 98.5H1076.5V1127.5H47.5ZM175.5 226.5H947.5V998.5H175.5ZM304.5 355.5H818.5V869.5H304.5ZM432.5 483.5H690.5V741.5H432.5Z"/>
<path fill="#000" d="M47 98h1v1h-1zm1 1h1v1h-1zm1 1h1v1h-1zm1 1h1v1h-1zm1 1h1v1h-1zm1 1h1v1h-1zm1 1h1v1h-1zm1 1h1v1h-1zm1 1h1v1h-1zm1 1h1v1h-1zm1 1h1v1h-1zm1 1h1v1h-1zm1 1h1v1h-1zm1 1h1v1h-1zm1 1h1v1h-1zm1 1h1v1h-1zm1 1h1v1h-1zm1 1h1v1h-1zm1 1h1v1h-1zm1 1h1v1h-1zm1 1h1v1h-1zm1 1h1v1h-1zm1 1h1v1h-1zm1 1h1v1h-1zm1 1h1v1h-1zm1 1h1v1h-1zm1 1h1v1h-1zm1 1h1v1h-1zm1 1h1v1h-1zm1 1h1v1h-1zm1 1h1v1h-1zm1 1h1v1h-1zm1 1h1v1h-1zm1 1h1v1h-1zm1 1h1v1h-1zm1 1h1v1h-1zm1 1h1v1h-1zm1 1h1v1h-1zm1 1h1v1h-1zm1 1h1v1h-1zm1 1h1v1h-1zm1 1h1v1h-1zm1 1h1v1h-1zm1 1h1v1h-1zm1 1h1v1h-1zm1 1h1v1h-1zm1 1h1v1h-1zm1 1h1v1h-1zm1 1h1v1h-1zm1 1h1v1h-1zm1 1h1v1h-1zm1 1h1v1h-1zm1 1h1v1h-1zm1 1h1v1h-1zm1 1h1v1h-1zm1 1h1v1h-1zm1 1h1v1h-1zm1 1h1v1h-1zm1 1h1v1h-1zm1 1h1v1h-1zm1 1h1v1h-1zm1 1h1v1h-1zm1 1h1v1h-1zm1 1h1v1h-1zm1 1h1v1h-1zm1 1h1v1h-1zm1 1h1v1h-1zm1 1h1v1h-1zm1 1h1v1h-1zm1 1h1v1h-1zm1 1h1v1h-1zm1 1h1v1h-1zm1 1h1v1h-1zm1 1h1v1h-1zm1 1h1v1h-1zm1 1h1v1h-1zm1 1h1v1h-1zm1 1h1v1h-1zm1 1h1v1h-1zm1 1h1v1h-1zm1 1h1v1h-1zm1 1h1v1h-1zm1 1h1v1h-1zm1 1h1v1h-1zm1 1h1v1h-1zm1 1h1v1h-1zm1 1h1v1h-1zm1 1h1v1h-1zm1 1h1v1h-1zm1 1h1v1h-1zm1 1h1v1h-1zm1 1h1v1h-1zm1 1h1v1h-1zm1 1h1v1h-1zm1 1h1v1h-1zm1 1h1v1h-1zm1 1h1v1h-1zm1 1h1v1h-1zm1 1h1v1h-1zm1 1h1v1h-1zm1 1h1v1h-1zm1 1h1v1h-1zm1 1h1v1h-1zm1 1h1v1h-1zm1 1h1v1h-1zm1 1h1v1h-1zm1 1h1v1h-1zm1 1h1v1h-1zm1 1h1v1h-1zm1 1h1v1h-1zm1 1h1v1h-1zm1 1h1v1h-1zm1 1h1v1h-1zm1 1h1v1h-1zm1 1h1v1h-1zm1 1h1v1h-1zm1 1h1v1h-1zm1 1h1v1h-1zm1 1h1v1h-1zm1 1h1v1h-1zm1 1h1v1h-1zm1 1h1v1h-1zm1 1h1v1h-1zm1 1h1v1h-1zm1 1h1v1h-1zm1 1h1v1h-1zm1 1h1v1h-1zm1 1h1v1h-1zm1 1h1v1h-1zM175 226h1v1h-1zm1 1h1v1h-1zm1 1h1v1h-1zm1 1h1v1h-1zm1 1h1v1h-1zm1 1h1v1h-1zm1 1h1v1h-1zm1 1h1v1h-1zm1 1h1v1h-1zm1 1h1v1h-1zm1 1h1v1h-1zm1 1h1v1h-1zm1 1h1v1h-1zm1 1h1v1h-1zm1 1h1v1h-1zm1 1h1v1h-1zm1 1h1v1h-1zm1 1h1v1h-1zm1 1h1v1h-1zm1 1h1v1h-1zm1 1h1v1h-1zm1 1h1v1h-1zm1 1h1v1h-1zm1 1h1v1h-1zm1 1h1v1h-1zm1 1h1v1h-1zm1 1h1v1h-1zm1 1h1v1h-1zm1 1h1v1h-1zm1 1h1v1h-1zm1 1h1v1h-1zm1 1h1v1h-1zm1 1h1v1h-1zm1 1h1v1h-1zm1 1h1v1h-1zm1 1h1v1h-1zm1 1h1v1h-1zm1 1h1v1h-1zm1 1h1v1h-1zm1 1h1v1h-1zm1 1h1v1h-1zm1 1h1v1h-1zm1 1h1v1h-1zm1 1h1v1h-1zm1 1h1v1h-1zm1 1h1v1h-1zm1 1h1v1h-1zm1 1h1v1h-1zm1 1h1v1h-1zm1 1h1v1h-1zm1 1h1v1h-1zm1 1h1v1h-1zm1 1h1v1h-1zm1 1h1v1h-1zm1 1h1v1h-1zm1 1h1v1h-1zm1 1h1v1h-1zm1 1h1v1h-1zm1 1h1v1h-1zm1 1h1v1h-1zm1 1h1v1h-1zm1 1h1v1h-1zm1 1h1v1h-1zm1 1h1v1h-1zm1 1h1v1h-1zm1 1h1v1h-1zm1 1h1v1h-1zm1 1h1v1h-1zm1 1h1v1h-1zm1 1h1v1h-1zm1 1h1v1h-1zm1 1h1v1h-1zm1 1h1v1h-1zm1 1h1v1h-1zm1 1h1v1h-1zm1 1h1v1h-1zm1 1h1v1h-1zm1 1h1v1h-1zm1 1h1v1h-1zm1 1h1v1h-1zm1 1h1v1h-1zm1 1h1v1h-1zm1 1h1v1h-1zm1 1h1v1h-1zm1 1h1v1h-1zm1 1h1v1h-1zm1 1h1v1h-1zm1 1h1v1h-1zm1 1h1v1h-1zm1 1h1v1h-1zm1 1h1v1h-1zm1 1h1v1h-1zm1 1h1v1h-1zm1 1h1v1h-1zm1 1h1v1h-1zm1 1h1v1h-1zm1 1h1v1h-1zm1 1h1v1h-1zm1 1h1v1h-1zm1 1h1v1h-1zm1 1h1v1h-1zm1 1h1v1h-1zm1 1h1v1h-1zm1 1h1v1h-1zm1 1h1v1h-1zm1 1h1v1h-1zm1 1h1v1h-1zm1 1h1v1h-1zm1 1h1v1h-1zm1 1h1v1h-1zm1 1h1v1h-1zm1 1h1v1h-1zm1 1h1v1h-1zm1 1h1v1h-1zm1 1h1v1h-1zm1 1h1v1h-1zm1 1h1v1h-1zm1 1h1v1h-1zm1 1h1v1h-1zm1 1h1v1h-1zm1 1h1v1h-1zm1 1h1v1h-1zm1 1h1v1h-1zm1 1h1v1h-1zm1 1h1v1h-1zm1 1h1v1h-1zm1 1h1v1h-1zm1 1h1v1h-1zm1 1h1v1h-1zm1 1h1v1h-1zM304 355h1v1h-1zm1 1h1v1h-1zm1 1h1v1h-1zm1 1h1v1h-1zm1 1h1v1h-1zm1 1h1v1h-1zm1 1h1v1h-1zm1 1h1v1h-1zm1 1h1v1h-1zm1 1h1v1h-1zm1 1h1v1h-1zm1 1h1v1h-1zm1 1h1v1h-1zm1 1h1v1h-1zm1 1h1v1h-1zm1 1h1v1h-1zm1 1h1v1h-1zm1 1h1v1h-1zm1 1h1v1h-1zm1 1h1v1h-1zm1 1h1v1h-1zm1 1h1v1h-1zm1 1h1v1h-1zm1 1h1v1h-1zm1 1h1v1h-1zm1 1h1v1h-1zm1 1h1v1h-1zm1 1h1v1h-1zm1 1h1v1h-1zm1 1h1v1h-1zm1 1h1v1h-1zm1 1h1v1h-1zm1 1h1v1h-1zm1 1h1v1h-1zm1 1h1v1h-1zm1 1h1v1h-1zm1 1h1v1h-1zm1 1h1v1h-1zm1 1h1v1h-1zm1 1h1v1h-1zm1 1h1v1h-1zm1 1h1v1h-1zm1 1h1v1h-1zm1 1h1v1h-1zm1 1h1v1h-1zm1 1h1v1h-1zm1 1h1v1h-1zm1 1h1v1h-1zm1 1h1v1h-1zm1 1h1v1h-1zm1 1h1v1h-1zm1 1h1v1h-1zm1 1h1v1h-1zm1 1h1v1h-1zm1 1h1v1h-1zm1 1h1v1h-1zm1 1h1v1h-1zm1 1h1v1h-1zm1 1h1v1h-1zm1 1h1v1h-1zm1 1h1v1h-1zm1 1h1v1h-1zm1 1h1v1h-1zm1 1h1v1h-1zm1 1h1v1h-1zm1 1h1v1h-1zm1 1h1v1h-1zm1 1h1v1h-1zm1 1h1v1h-1zm1 1h1v1h-1zm1 1h1v1h-1zm1 1h1v1h-1zm1 1h1v1h-1zm1 1h1v1h-1zm1 1h1v1h-1zm1 1h1v1h-1zm1 1h1v1h-1zm1 1h1v1h-1zm1 1h1v1h-1zm1 1h1v1h-1zm1 1h1v1h-1zm1 1h1v1h-1zm1 1h1v1h-1zm1 1h1v1h-1zm1 1h1v1h-1zm1 1h1v1h-1zm1 1h1v1h-1zm1 1h1v1h-1zm1 1h1v1h-1zm1 1h1v1h-1zm1 1h1v1h-1zm1 1h1v1h-1zm1 1h1v1h-1zm1 1h1v1h-1zm1 1h1v1h-1zm1 1h1v1h-1zm1 1h1v1h-1zm1 1h1v1h-1zm1 1h1v1h-1zm1 1h1v1h-1zm1 1h1v1h-1zm1 1h1v1h-1zm1 1h1v1h-1zm1 1h1v1h-1zm1 1h1v1h-1zm1 1h1v1h-1zm1 1h1v1h-1zm1 1h1v1h-1zm1 1h1v1h-1zm1 1h1v1h-1zm1 1h1v1h-1zm1 1h1v1h-1zm1 1h1v1h-1zm1 1h1v1h-1zm1 1h1v1h-1zm1 1h1v1h-1zm1 1h1v1h-1zm1 1h1v1h-1zm1 1h1v1h-1zm1 1h1v1h-1zm1 1h1v1h-1zm1 1h1v1h-1zm1 1h1v1h-1zm1 1h1v1h-1zm1 1h1v1h-1zm1 1h1v1h-1zm1 1h1v1h-1zm1 1h1v1h-1zm1 1h1v1h-1zM1076 98h1v1h-1zm-1 1h1v1h-1zm-1 1h1v1h-1zm-1 1h1v1h-1zm-1 1h1v1h-1zm-1 1h1v1h-1zm-1 1h1v1h-1zm-1 1h1v1h-1zm-1 1h1v1h-1zm-1 1h1v1h-1zm-1 1h1v1h-1zm-1 1h1v1h-1zm-1 1h1v1h-1zm-1 1h1v1h-1zm-1 1h1v1h-1zm-1 1h1v1h-1zm-1 1h1v1h-1zm-1 1h1v1h-1zm-1 1h1v1h-1zm-1 1h1v1h-1zm-1 1h1v1h-1zm-1 1h1v1h-1zm-1 1h1v1h-1zm-1 1h1v1h-1zm-1 1h1v1h-1zm-1 1h1v1h-1zm-1 1h1v1h-1zm-1 1h1v1h-1zm-1 1h1v1h-1zm-1 1h1v1h-1zm-1 1h1v1h-1zm-1 1h1v1h-1zm-1 1h1v1h-1zm-1 1h1v1h-1zm-1 1h1v1h-1zm-1 1h1v1h-1zm-1 1h1v1h-1zm-1 1h1v1h-1zm-1 1h1v1h-1zm-1 1h1v1h-1zm-1 1h1v1h-1zm-1 1h1v1h-1zm-1 1h1v1h-1zm-1 1h1v1h-1zm-1 1h1v1h-1zm-1 1h1v1h-1zm-1 1h1v1h-1zm-1 1h1v1h-1zm-1 1h1v1h-1zm-1 1h1v1h-1zm-1 1h1v1h-1zm-1 1h1v1h-1zm-1 1h1v1h-1zm-1 1h1v1h-1zm-1 1h1v1h-1zm-1 1h1v1h-1zm-1 1h1v1h-1zm-1 1h1v1h-1zm-1 1h1v1h-1zm-1 1h1v1h-1zm-1 1h1v1h-1zm-1 1h1v1h-1zm-1 1h1v1h-1zm-1 1h1v1h-1zm-1 1h1v1h-1zm-1 0h1v1h-1zm-1 1h1v1h-1zm-1 1h1v1h-1zm-1 1h1v1h-1zm-1 1h1v1h-1zm-1 1h1v1h-1zm-1 1h1v1h-1zm-1 1h1v1h-1zm-1 1h1v1h-1zm-1 1h1v1h-1zm-1 1h1v1h-1zm-1 1h1v1h-1zm-1 1h1v1h-1zm-1 1h1v1h-1zm-1 1h1v1h-1zm-1 1h1v1h-1zm-1 1h1v1h-1zm-1 1h1v1h-1zm-1 1h1v1h-1zm-1 1h1v1h-1zm-1 1h1v1h-1zm-1 1h1v1h-1zm-1 1h1v1h-1zm-1 1h1v1h-1zm-1 1h1v1h-1zm-1 1h1v1h-1zm-1 1h1v1h-1zm-1 1h1v1h-1zm-1 1h1v1h-1zm-1 1h1v1h-1zm-1 1h1v1h-1zm-1 1h1v1h-1zm-1 1h1v1h-1zm-1 1h1v1h-1zm-1 1h1v1h-1zm-1 1h1v1h-1zm-1 1h1v1h-1zm-1 1h1v1h-1zm-1 1h1v1h-1zm-1 1h1v1h-1zm-1 1h1v1h-1zm-1 1h1v1h-1zm-1 1h1v1h-1zm-1 1h1v1h-1zm-1 1h1v1h-1zm-1 1h1v1h-1zm-1 1h1v1h-1zm-1 1h1v1h-1zm-1 1h1v1h-1zm-1 1h1v1h-1zm-1 1h1v1h-1zm-1 1h1v1h-1zm-1 1h1v1h-1zm-1 1h1v1h-1zm-1 1h1v1h-1zm-1 1h1v1h-1zm-1 1h1v1h-1zm-1 1h1v1h-1zm-1 1h1v1h-1zm-1 1h1v1h-1zm-1 1h1v1h-1zm-1 1h1v1h-1zm-1 1h1v1h-1zm-1 1h1v1h-1zm-1 1h1v1h-1zM947 226h1v1h-1zm-1 1h1v1h-1zm-1 1h1v1h-1zm-1 1h1v1h-1zm-1 1h1v1h-1zm-1 1h1v1h-1zm-1 1h1v1h-1zm-1 1h1v1h-1zm-1 1h1v1h-1zm-1 1h1v1h-1zm-1 1h1v1h-1zm-1 1h1v1h-1zm-1 1h1v1h-1zm-1 1h1v1h-1zm-1 1h1v1h-1zm-1 1h1v1h-1zm-1 1h1v1h-1zm-1 1h1v1h-1zm-1 1h1v1h-1zm-1 1h1v1h-1zm-1 1h1v1h-1zm-1 1h1v1h-1zm-1 1h1v1h-1zm-1 1h1v1h-1zm-1 1h1v1h-1zm-1 1h1v1h-1zm-1 1h1v1h-1zm-1 1h1v1h-1zm-1 1h1v1h-1zm-1 1h1v1h-1zm-1 1h1v1h-1zm-1 1h1v1h-1zm-1 1h1v1h-1zm-1 1h1v1h-1zm-1 1h1v1h-1zm-1 1h1v1h-1zm-1 1h1v1h-1zm-1 1h1v1h-1zm-1 1h1v1h-1zm-1 1h1v1h-1zm-1 1h1v1h-1zm-1 1h1v1h-1zm-1 1h1v1h-1zm-1 1h1v1h-1zm-1 1h1v1h-1zm-1 1h1v1h-1zm-1 1h1v1h-1zm-1 1h1v1h-1zm-1 1h1v1h-1zm-1 1h1v1h-1zm-1 1h1v1h-1zm-1 1h1v1h-1zm-1 1h1v1h-1zm-1 1h1v1h-1zm-1 1h1v1h-1zm-1 1h1v1h-1zm-1 1h1v1h-1zm-1 1h1v1h-1zm-1 1h1v1h-1zm-1 1h1v1h-1zm-1 1h1v1h-1zm-1 1h1v1h-1zm-1 1h1v1h-1zm-1 1h1v1h-1zm-1 1h1v1h-1zm-1 1h1v1h-1zm-1 1h1v1h-1zm-1 1h1v1h-1zm-1 1h1v1h-1zm-1 1h1v1h-1zm-1 1h1v1h-1zm-1 1h1v1h-1zm-1 1h1v1h-1zm-1 1h1v1h-1zm-1 1h1v1h-1zm-1 1h1v1h-1zm-1 1h1v1h-1zm-1 1h1v1h-1zm-1 1h1v1h-1zm-1 1h1v1h-1zm-1 1h1v1h-1zm-1 1h1v1h-1zm-1 1h1v1h-1zm-1 1h1v1h-1zm-1 1h1v1h-1zm-1 1h1v1h-1zm-1 1h1v1h-1zm-1 1h1v1h-1zm-1 1h1v1h-1zm-1 1h1v1h-1zm-1 1h1v1h-1zm-1 1h1v1h-1zm-1 1h1v1h-1zm-1 1h1v1h-1zm-1 1h1v1h-1zm-1 1h1v1h-1zm-1 1h1v1h-1zm-1 1h1v1h-1zm-1 1h1v1h-1zm-1 1h1v1h-1zm-1 1h1v1h-1zm-1 1h1v1h-1zm-1 1h1v1h-1zm-1 1h1v1h-1zm-1 1h1v1h-1zm-1 1h1v1h-1zm-1 1h1v1h-1zm-1 1h1v1h-1zm-1 1h1v1h-1zm-1 1h1v1h-1zm-1 1h1v1h-1zm-1 1h1v1h-1zm-1 1h1v1h-1zm-1 1h1v1h-1zm-1 1h1v1h-1zm-1 1h1v1h-1zm-1 1h1v1h-1zm-1 1h1v1h-1zm-1 1h1v1h-1zm-1 1h1v1h-1zm-1 1h1v1h-1zm-1 1h1v1h-1zm-1 1h1v1h-1zm-1 1h1v1h-1zm-1 1h1v1h-1zm-1 1h1v1h-1zm-1 1h1v1h-1zm-1 1h1v1h-1zm-1 1h1v1h-1zm-1 1h1v1h-1zM818 355h1v1h-1zm-1 1h1v1h-1zm-1 1h1v1h-1zm-1 1h1v1h-1zm-1 1h1v1h-1zm-1 1h1v1h-1zm-1 1h1v1h-1zm-1 1h1v1h-1zm-1 1h1v1h-1zm-1 1h1v1h-1zm-1 1h1v1h-1zm-1 1h1v1h-1zm-1 1h1v1h-1zm-1 1h1v1h-1zm-1 1h1v1h-1zm-1 1h1v1h-1zm-1 1h1v1h-1zm-1 1h1v1h-1zm-1 1h1v1h-1zm-1 1h1v1h-1zm-1 1h1v1h-1zm-1 1h1v1h-1zm-1 1h1v1h-1zm-1 1h1v1h-1zm-1 1h1v1h-1zm-1 1h1v1h-1zm-1 1h1v1h-1zm-1 1h1v1h-1zm-1 1h1v1h-1zm-1 1h1v1h-1zm-1 1h1v1h-1zm-1 1h1v1h-1zm-1 1h1v1h-1zm-1 1h1v1h-1zm-1 1h1v1h-1zm-1 1h1v1h-1zm-1 1h1v1h-1zm-1 1h1v1h-1zm-1 1h1v1h-1zm-1 1h1v1h-1zm-1 1h1v1h-1zm-1 1h1v1h-1zm-1 1h1v1h-1zm-1 1h1v1h-1zm-1 1h1v1h-1zm-1 1h1v1h-1zm-1 1h1v1h-1zm-1 1h1v1h-1zm-1 1h1v1h-1zm-1 1h1v1h-1zm-1 1h1v1h-1zm-1 1h1v1h-1zm-1 1h1v1h-1zm-1 1h1v1h-1zm-1 1h1v1h-1zm-1 1h1v1h-1zm-1 1h1v1h-1zm-1 1h1v1h-1zm-1 1h1v1h-1zm-1 1h1v1h-1zm-1 1h1v1h-1zm-1 1h1v1h-1zm-1 1h1v1h-1zm-1 1h1v1h-1zm-1 1h1v1h-1zm-1 1h1v1h-1zm-1 1h1v1h-1zm-1 1h1v1h-1zm-1 1h1v1h-1zm-1 1h1v1h-1zm-1 1h1v1h-1zm-1 1h1v1h-1zm-1 1h1v1h-1zm-1 1h1v1h-1zm-1 1h1v1h-1zm-1 1h1v1h-1zm-1 1h1v1h-1zm-1 1h1v1h-1zm-1 1h1v1h-1zm-1 1h1v1h-1zm-1 1h1v1h-1zm-1 1h1v1h-1zm-1 1h1v1h-1zm-1 1h1v1h-1zm-1 1h1v1h-1zm-1 1h1v1h-1zm-1 1h1v1h-1zm-1 1h1v1h-1zm-1 1h1v1h-1zm-1 1h1v1h-1zm-1 1h1v1h-1zm-1 1h1v1h-1zm-1 1h1v1h-1zm-1 1h1v1h-1zm-1 1h1v1h-1zm-1 1h1v1h-1zm-1 1h1v1h-1zm-1 1h1v1h-1zm-1 1h1v1h-1zm-1 1h1v1h-1zm-1 1h1v1h-1zm-1 1h1v1h-1zm-1 1h1v1h-1zm-1 1h1v1h-1zm-1 1h1v1h-1zm-1 1h1v1h-1zm-1 1h1v1h-1zm-1 1h1v1h-1zm-1 1h1v1h-1zm-1 1h1v1h-1zm-1 1h1v1h-1zm-1 1h1v1h-1zm-1 1h1v1h-1zm-1 1h1v1h-1zm-1 1h1v1h-1zm-1 1h1v1h-1zm-1 1h1v1h-1zm-1 1h1v1h-1zm-1 1h1v1h-1zm-1 1h1v1h-1zm-1 1h1v1h-1zm-1 1h1v1h-1zm-1 1h1v1h-1zm-1 1h1v1h-1zm-1 1h1v1h-1zm-1 1h1v1h-1zm-1 1h1v1h-1zm-1 1h1v1h-1zm-1 1h1v1h-1zM47 1127h1v1h-1zm1 -1h1v1h-1zm1 -1h1v1h-1zm1 -1h1v1h-1zm1 -1h1v1h-1zm1 -1h1v1h-1zm1 -1h1v1h-1zm1 -1h1v1h-1zm1 -1h1v1h-1zm1 -1h1v1h-1zm1 -1h1v1h-1zm1 -1h1v1h-1zm1 -1h1v1h-1zm1 -1h1v1h-1zm1 -1h1v1h-1zm1 -1h1v1h-1zm1 -1h1v1h-1zm1 -1h1v1h-1zm1 -1h1v1h-1zm1 -1h1v1h-1zm1 -1h1v1h-1zm1 -1h1v1h-1zm1 -1h1v1h-1zm1 -1h1v1h-1zm1 -1h1v1h-1zm1 -1h1v1h-1zm1 -1h1v1h-1zm1 -1h1v1h-1zm1 -1h1v1h-1zm1 -1h1v1h-1zm1 -1h1v1h-1zm1 -1h1v1h-1zm1 -1h1v1h-1zm1 -1h1v1h-1zm1 -1h1v1h-1zm1 -1h1v1h-1zm1 -1h1v1h-1zm1 -1h1v1h-1zm1 -1h1v1h-1zm1 -1h1v1h-1zm1 -1h1v1h-1zm1 -1h1v1h-1zm1 -1h1v1h-1zm1 -1h1v1h-1zm1 -1h1v1h-1zm1 -1h1v1h-1zm1 -1h1v1h-1zm1 -1h1v1h-1zm1 -1h1v1h-1zm1 -1h1v1h-1zm1 -1h1v1h-1zm1 -1h1v1h-1zm1 -1h1v1h-1zm1 -1h1v1h-1zm1 -1h1v1h-1zm1 -1h1v1h-1zm1 -1h1v1h-1zm1 -1h1v1h-1zm1 -1h1v1h-1zm1 -1h1v1h-1zm1 -1h1v1h-1zm1 -1h1v1h-1zm1 -1h1v1h-1zm1 -1h1v1h-1zm1 -1h1v1h-1zm0 -1h1v1h-1zm1 -1h1v1h-1zm1 -1h1v1h-1zm1 -1h1v1h-1zm1 -1h1v1h-1zm1 -1h1v1h-1zm1 -1h1v1h-1zm1 -1h1v1h-1zm1 -1h1v1h-1zm1 -1h1v1h-1zm1 -1h1v1h-1zm1 -1h1v1h-1zm1 -1h1v1h-1zm1 -1h1v1h-1zm1 -1h1v1h-1zm1 -1h1v1h-1zm1 -1h1v1h-1zm1 -1h1v1h-1zm1 -1h1v1h-1zm1 -1h1v1h-1zm1 -1h1v1h-1zm1 -1h1v1h-1zm1 -1h1v1h-1zm1 -1h1v1h-1zm1 -1h1v1h-1zm1 -1h1v1h-1zm1 -1h1v1h-1zm1 -1h1v1h-1zm1 -1h1v1h-1zm1 -1h1v1h-1zm1 -1h1v1h-1zm1 -1h1v1h-1zm1 -1h1v1h-1zm1 -1h1v1h-1zm1 -1h1v1h-1zm1 -1h1v1h-1zm1 -1h1v1h-1zm1 -1h1v1h-1zm1 -1h1v1h-1zm1 -1h1v1h-1zm1 -1h1v1h-1zm1 -1h1v1h-1zm1 -1h1v1h-1zm1 -1h1v1h-1zm1 -1h1v1h-1zm1 -1h1v1h-1zm1 -1h1v1h-1zm1 -1h1v1h-1zm1 -1h1v1h-1zm1 -1h1v1h-1zm1 -1h1v1h-1zm1 -1h1v1h-1zm1 -1h1v1h-1zm1 -1h1v1h-1zm1 -1h1v1h-1zm1 -1h1v1h-1zm1 -1h1v1h-1zm1 -1h1v1h-1zm1 -1h1v1h-1zm1 -1h1v1h-1zm1 -1h1v1h-1zm1 -1h1v1h-1zm1 -1h1v1h-1zm1 -1h1v1h-1zm1 -1h1v1h-1zM175 998h1v1h-1zm1 -1h1v1h-1zm1 -1h1v1h-1zm1 -1h1v1h-1zm1 -1h1v1h-1zm1 -1h1v1h-1zm1 -1h1v1h-1zm1 -1h1v1h-1zm1 -1h1v1h-1zm1 -1h1v1h-1zm1 -1h1v1h-1zm1 -1h1v1h-1zm1 -1h1v1h-1zm1 -1h1v1h-1zm1 -1h1v1h-1zm1 -1h1v1h-1zm1 -1h1v1h-1zm1 -1h1v1h-1zm1 -1h1v1h-1zm1 -1h1v1h-1zm1 -1h1v1h-1zm1 -1h1v1h-1zm1 -1h1v1h-1zm1 -1h1v1h-1zm1 -1h1v1h-1zm1 -1h1v1h-1zm1 -1h1v1h-1zm1 -1h1v1h-1zm1 -1h1v1h-1zm1 -1h1v1h-1zm1 -1h1v1h-1zm1 -1h1v1h-1zm1 -1h1v1h-1zm1 -1h1v1h-1zm1 -1h1v1h-1zm1 -1h1v1h-1zm1 -1h1v1h-1zm1 -1h1v1h-1zm1 -1h1v1h-1zm1 -1h1v1h-1zm1 -1h1v1h-1zm1 -1h1v1h-1zm1 -1h1v1h-1zm1 -1h1v1h-1zm1 -1h1v1h-1zm1 -1h1v1h-1zm1 -1h1v1h-1zm1 -1h1v1h-1zm1 -1h1v1h-1zm1 -1h1v1h-1zm1 -1h1v1h-1zm1 -1h1v1h-1zm1 -1h1v1h-1zm1 -1h1v1h-1zm1 -1h1v1h-1zm1 -1h1v1h-1zm1 -1h1v1h-1zm1 -1h1v1h-1zm1 -1h1v1h-1zm1 -1h1v1h-1zm1 -1h1v1h-1zm1 -1h1v1h-1zm1 -1h1v1h-1zm1 -1h1v1h-1zm1 -1h1v1h-1zm1 -1h1v1h-1zm1 -1h1v1h-1zm1 -1h1v1h-1zm1 -1h1v1h-1zm1 -1h1v1h-1zm1 -1h1v1h-1zm1 -1h1v1h-1zm1 -1h1v1h-1zm1 -1h1v1h-1zm1 -1h1v1h-1zm1 -1h1v1h-1zm1 -1h1v1h-1zm1 -1h1v1h-1zm1 -1h1v1h-1zm1 -1h1v1h-1zm1 -1h1v1h-1zm1 -1h1v1h-1zm1 -1h1v1h-1zm1 -1h1v1h-1zm1 -1h1v1h-1zm1 -1h1v1h-1zm1 -1h1v1h-1zm1 -1h1v1h-1zm1 -1h1v1h-1zm1 -1h1v1h-1zm1 -1h1v1h-1zm1 -1h1v1h-1zm1 -1h1v1h-1zm1 -1h1v1h-1zm1 -1h1v1h-1zm1 -1h1v1h-1zm1 -1h1v1h-1zm1 -1h1v1h-1zm1 -1h1v1h-1zm1 -1h1v1h-1zm1 -1h1v1h-1zm1 -1h1v1h-1zm1 -1h1v1h-1zm1 -1h1v1h-1zm1 -1h1v1h-1zm1 -1h1v1h-1zm1 -1h1v1h-1zm1 -1h1v1h-1zm1 -1h1v1h-1zm1 -1h1v1h-1zm1 -1h1v1h-1zm1 -1h1v1h-1zm1 -1h1v1h-1zm1 -1h1v1h-1zm1 -1h1v1h-1zm1 -1h1v1h-1zm1 -1h1v1h-1zm1 -1h1v1h-1zm1 -1h1v1h-1zm1 -1h1v1h-1zm1 -1h1v1h-1zm1 -1h1v1h-1zm1 -1h1v1h-1zm1 -1h1v1h-1zm1 -1h1v1h-1zm1 -1h1v1h-1zm1 -1h1v1h-1zm1 -1h1v1h-1zm1 -1h1v1h-1zm1 -1h1v1h-1zM304 869h1v1h-1zm1 -1h1v1h-1zm1 -1h1v1h-1zm1 -1h1v1h-1zm1 -1h1v1h-1zm1 -1h1v1h-1zm1 -1h1v1h-1zm1 -1h1v1h-1zm1 -1h1v1h-1zm1 -1h1v1h-1zm1 -1h1v1h-1zm1 -1h1v1h-1zm1 -1h1v1h-1zm1 -1h1v1h-1zm1 -1h1v1h-1zm1 -1h1v1h-1zm1 -1h1v1h-1zm1 -1h1v1h-1zm1 -1h1v1h-1zm1 -1h1v1h-1zm1 -1h1v1h-1zm1 -1h1v1h-1zm1 -1h1v1h-1zm1 -1h1v1h-1zm1 -1h1v1h-1zm1 -1h1v1h-1zm1 -1h1v1h-1zm1 -1h1v1h-1zm1 -1h1v1h-1zm1 -1h1v1h-1zm1 -1h1v1h-1zm1 -1h1v1h-1zm1 -1h1v1h-1zm1 -1h1v1h-1zm1 -1h1v1h-1zm1 -1h1v1h-1zm1 -1h1v1h-1zm1 -1h1v1h-1zm1 -1h1v1h-1zm1 -1h1v1h-1zm1 -1h1v1h-1zm1 -1h1v1h-1zm1 -1h1v1h-1zm1 -1h1v1h-1zm1 -1h1v1h-1zm1 -1h1v1h-1zm1 -1h1v1h-1zm1 -1h1v1h-1zm1 -1h1v1h-1zm1 -1h1v1h-1zm1 -1h1v1h-1zm1 -1h1v1h-1zm1 -1h1v1h-1zm1 -1h1v1h-1zm1 -1h1v1h-1zm1 -1h1v1h-1zm1 -1h1v1h-1zm1 -1h1v1h-1zm1 -1h1v1h-1zm1 -1h1v1h-1zm1 -1h1v1h-1zm1 -1h1v1h-1zm1 -1h1v1h-1zm1 -1h1v1h-1zm1 -1h1v1h-1zm1 -1h1v1h-1zm1 -1h1v1h-1zm1 -1h1v1h-1zm1 -1h1v1h-1zm1 -1h1v1h-1zm1 -1h1v1h-1zm1 -1h1v1h-1zm1 -1h1v1h-1zm1 -1h1v1h-1zm1 -1h1v1h-1zm1 -1h1v1h-1zm1 -1h1v1h-1zm1 -1h1v1h-1zm1 -1h1v1h-1zm1 -1h1v1h-1zm1 -1h1v1h-1zm1 -1h1v1h-1zm1 -1h1v1h-1zm1 -1h1v1h-1zm1 -1h1v1h-1zm1 -1h1v1h-1zm1 -1h1v1h-1zm1 -1h1v1h-1zm1 -1h1v1h-1zm1 -1h1v1h-1zm1 -1h1v1h-1zm1 -1h1v1h-1zm1 -1h1v1h-1zm1 -1h1v1h-1zm1 -1h1v1h-1zm1 -1h1v1h-1zm1 -1h1v1h-1zm1 -1h1v1h-1zm1 -1h1v1h-1zm1 -1h1v1h-1zm1 -1h1v1h-1zm1 -1h1v1h-1zm1 -1h1v1h-1zm1 -1h1v1h-1zm1 -1h1v1h-1zm1 -1h1v1h-1zm1 -1h1v1h-1zm1 -1h1v1h-1zm1 -1h1v1h-1zm1 -1h1v1h-1zm1 -1h1v1h-1zm1 -1h1v1h-1zm1 -1h1v1h-1zm1 -1h1v1h-1zm1 -1h1v1h-1zm1 -1h1v1h-1zm1 -1h1v1h-1zm1 -1h1v1h-1zm1 -1h1v1h-1zm1 -1h1v1h-1zm1 -1h1v1h-1zm1 -1h1v1h-1zm1 -1h1v1h-1zm1 -1h1v1h-1zm1 -1h1v1h-1zm1 -1h1v1h-1zm1 -1h1v1h-1zm1 -1h1v1h-1zm1 -1h1v1h-1zM1076 1127h1v1h-1zm-1 -1h1v1h-1zm-1 -1h1v1h-1zm-1 -1h1v1h-1zm-1 -1h1v1h-1zm-1 -1h1v1h-1zm-1 -1h1v1h-1zm-1 -1h1v1h-1zm-1 -1h1v1h-1zm-1 -1h1v1h-1zm-1 -1h1v1h-1zm-1 -1h1v1h-1zm-1 -1h1v1h-1zm-1 -1h1v1h-1zm-1 -1h1v1h-1zm-1 -1h1v1h-1zm-1 -1h1v1h-1zm-1 -1h1v1h-1zm-1 -1h1v1h-1zm-1 -1h1v1h-1zm-1 -1h1v1h-1zm-1 -1h1v1h-1zm-1 -1h1v1h-1zm-1 -1h1v1h-1zm-1 -1h1v1h-1zm-1 -1h1v1h-1zm-1 -1h1v1h-1zm-1 -1h1v1h-1zm-1 -1h1v1h-1zm-1 -1h1v1h-1zm-1 -1h1v1h-1zm-1 -1h1v1h-1zm-1 -1h1v1h-1zm-1 -1h1v1h-1zm-1 -1h1v1h-1zm-1 -1h1v1h-1zm-1 -1h1v1h-1zm-1 -1h1v1h-1zm-1 -1h1v1h-1zm-1 -1h1v1h-1zm-1 -1h1v1h-1zm-1 -1h1v1h-1zm-1 -1h1v1h-1zm-1 -1h1v1h-1zm-1 -1h1v1h-1zm-1 -1h1v1h-1zm-1 -1h1v1h-1zm-1 -1h1v1h-1zm-1 -1h1v1h-1zm-1 -1h1v1h-1zm-1 -1h1v1h-1zm-1 -1h1v1h-1zm-1 -1h1v1h-1zm-1 -1h1v1h-1zm-1 -1h1v1h-1zm-1 -1h1v1h-1zm-1 -1h1v1h-1zm-1 -1h1v1h-1zm-1 -1h1v1h-1zm-1 -1h1v1h-1zm-1 -1h1v1h-1zm-1 -1h1v1h-1zm-1 -1h1v1h-1zm-1 -1h1v1h-1zm-1 -1h1v1h-1zm-1 -1h1v1h-1zm-1 -1h1v1h-1zm-1 -1h1v1h-1zm-1 -1h1v1h-1zm-1 -1h1v1h-1zm-1 -1h1v1h-1zm-1 -1h1v1h-1zm-1 -1h1v1h-1zm-1 -1h1v1h-1zm-1 -1h1v1h-1zm-1 -1h1v1h-1zm-1 -1h1v1h-1zm-1 -1h1v1h-1zm-1 -1h1v1h-1zm-1 -1h1v1h-1zm-1 -1h1v1h-1zm-1 -1h1v1h-1zm-1 -1h1v1h-1zm-1 -1h1v1h-1zm-1 -1h1v1h-1zm-1 -1h1v1h-1zm-1 -1h1v1h-1zm-1 -1h1v1h-1zm-1 -1h1v1h-1zm-1 -1h1v1h-1zm-1 -1h1v1h-1zm-1 -1h1v1h-1zm-1 -1h1v1h-1zm-1 -1h1v1h-1zm-1 -1h1v1h-1zm-1 -1h1v1h-1zm-1 -1h1v1h-1zm-1 -1h1v1h-1zm-1 -1h1v1h-1zm-1 -1h1v1h-1zm-1 -1h1v1h-1zm-1 -1h1v1h-1zm-1 -1h1v1h-1zm-1 -1h1v1h-1zm-1 -1h1v1h-1zm-1 -1h1v1h-1zm-1 -1h1v1h-1zm-1 -1h1v1h-1zm-1 -1h1v1h-1zm-1 -1h1v1h-1zm-1 -1h1v1h-1zm-1 -1h1v1h-1zm-1 -1h1v1h-1zm-1 -1h1v1h-1zm-1 -1h1v1h-1zm-1 -1h1v1h-1zm-1 -1h1v1h-1zm-1 -1h1v1h-1zm-1 -1h1v1h-1zm-1 -1h1v1h-1zm-1 -1h1v1h-1zm-1 -1h1v1h-1zm-1 -1h1v1h-1zm-1 -1h1v1h-1zm-1 -1h1v1h-1zm-1 -1h1v1h-1zm-1 -1h1v1h-1zm-1 -1h1v1h-1zm-1 -1h1v1h-1zm-1 -1h1v1h-1zM947 998h1v1h-1zm-1 -1h1v1h-1zm-1 -1h1v1h-1zm-1 -1h1v1h-1zm-1 -1h1v1h-1zm-1 -1h1v1h-1zm-1 -1h1v1h-1zm-1 -1h1v1h-1zm-1 -1h1v1h-1zm-1 -1h1v1h-1zm-1 -1h1v1h-1zm-1 -1h1v1h-1zm-1 -1h1v1h-1zm-1 -1h1v1h-1zm-1 -1h1v1h-1zm-1 -1h1v1h-1zm-1 -1h1v1h-1zm-1 -1h1v1h-1zm-1 -1h1v1h-1zm-1 -1h1v1h-1zm-1 -1h1v1h-1zm-1 -1h1v1h-1zm-1 -1h1v1h-1zm-1 -1h1v1h-1zm-1 -1h1v1h-1zm-1 -1h1v1h-1zm-1 -1h1v1h-1zm-1 -1h1v1h-1zm-1 -1h1v1h-1zm-1 -1h1v1h-1zm-1 -1h1v1h-1zm-1 -1h1v1h-1zm-1 -1h1v1h-1zm-1 -1h1v1h-1zm-1 -1h1v1h-1zm-1 -1h1v1h-1zm-1 -1h1v1h-1zm-1 -1h1v1h-1zm-1 -1h1v1h-1zm-1 -1h1v1h-1zm-1 -1h1v1h-1zm-1 -1h1v1h-1zm-1 -1h1v1h-1zm-1 -1h1v1h-1zm-1 -1h1v1h-1zm-1 -1h1v1h-1zm-1 -1h1v1h-1zm-1 -1h1v1h-1zm-1 -1h1v1h-1zm-1 -1h1v1h-1zm-1 -1h1v1h-1zm-1 -1h1v1h-1zm-1 -1h1v1h-1zm-1 -1h1v1h-1zm-1 -1h1v1h-1zm-1 -1h1v1h-1zm-1 -1h1v1h-1zm-1 -1h1v1h-1zm-1 -1h1v1h-1zm-1 -1h1v1h-1zm-1 -1h1v1h-1zm-1 -1h1v1h-1zm-1 -1h1v1h-1zm-1 -1h1v1h-1zm-1 -1h1v1h-1zm-1 -1h1v1h-1zm-1 -1h1v1h-1zm-1 -1h1v1h-1zm-1 -1h1v1h-1zm-1 -1h1v1h-1zm-1 -1h1v1h-1zm-1 -1h1v1h-1zm-1 -1h1v1h-1zm-1 -1h1v1h-1zm-1 -1h1v1h-1zm-1 -1h1v1h-1zm-1 -1h1v1h-1zm-1 -1h1v1h-1zm-1 -1h1v1h-1zm-1 -1h1v1h-1zm-1 -1h1v1h-1zm-1 -1h1v1h-1zm-1 -1h1v1h-1zm-1 -1h1v1h-1zm-1 -1h1v1h-1zm-1 -1h1v1h-1zm-1 -1h1v1h-1zm-1 -1h1v1h-1zm-1 -1h1v1h-1zm-1 -1h1v1h-1zm-1 -1h1v1h-1zm-1 -1h1v1h-1zm-1 -1h1v1h-1zm-1 -1h1v1h-1zm-1 -1h1v1h-1zm-1 -1h1v1h-1zm-1 -1h1v1h-1zm-1 -1h1v1h-1zm-1 -1h1v1h-1zm-1 -1h1v1h-1zm-1 -1h1v1h-1zm-1 -1h1v1h-1zm-1 -1h1v1h-1zm-1 -1h1v1h-1zm-1 -1h1v1h-1zm-1 -1h1v1h-1zm-1 -1h1v1h-1zm-1 -1h1v1h-1zm-1 -1h1v1h-1zm-1 -1h1v1h-1zm-1 -1h1v1h-1zm-1 -1h1v1h-1zm-1 -1h1v1h-1zm-1 -1h1v1h-1zm-1 -1h1v1h-1zm-1 -1h1v1h-1zm-1 -1h1v1h-1zm-1 -1h1v1h-1zm-1 -1h1v1h-1zm-1 -1h1v1h-1zm-1 -1h1v1h-1zm-1 -1h1v1h-1zm-1 -1h1v1h-1zm-1 -1h1v1h-1zm-1 -1h1v1h-1zm-1 -1h1v1h-1zm-1 -1h1v1h-1zm-1 -1h1v1h-1zm-1 -1h1v1h-1zm-1 -1h1v1h-1zM818 869h1v1h-1zm-1 -1h1v1h-1zm-1 -1h1v1h-1zm-1 -1h1v1h-1zm-1 -1h1v1h-1zm-1 -1h1v1h-1zm-1 -1h1v1h-1zm-1 -1h1v1h-1zm-1 -1h1v1h-1zm-1 -1h1v1h-1zm-1 -1h1v1h-1zm-1 -1h1v1h-1zm-1 -1h1v1h-1zm-1 -1h1v1h-1zm-1 -1h1v1h-1zm-1 -1h1v1h-1zm-1 -1h1v1h-1zm-1 -1h1v1h-1zm-1 -1h1v1h-1zm-1 -1h1v1h-1zm-1 -1h1v1h-1zm-1 -1h1v1h-1zm-1 -1h1v1h-1zm-1 -1h1v1h-1zm-1 -1h1v1h-1zm-1 -1h1v1h-1zm-1 -1h1v1h-1zm-1 -1h1v1h-1zm-1 -1h1v1h-1zm-1 -1h1v1h-1zm-1 -1h1v1h-1zm-1 -1h1v1h-1zm-1 -1h1v1h-1zm-1 -1h1v1h-1zm-1 -1h1v1h-1zm-1 -1h1v1h-1zm-1 -1h1v1h-1zm-1 -1h1v1h-1zm-1 -1h1v1h-1zm-1 -1h1v1h-1zm-1 -1h1v1h-1zm-1 -1h1v1h-1zm-1 -1h1v1h-1zm-1 -1h1v1h-1zm-1 -1h1v1h-1zm-1 -1h1v1h-1zm-1 -1h1v1h-1zm-1 -1h1v1h-1zm-1 -1h1v1h-1zm-1 -1h1v1h-1zm-1 -1h1v1h-1zm-1 -1h1v1h-1zm-1 -1h1v1h-1zm-1 -1h1v1h-1zm-1 -1h1v1h-1zm-1 -1h1v1h-1zm-1 -1h1v1h-1zm-1 -1h1v1h-1zm-1 -1h1v1h-1zm-1 -1h1v1h-1zm-1 -1h1v1h-1zm-1 -1h1v1h-1zm-1 -1h1v1h-1zm-1 -1h1v1h-1zm-1 -1h1v1h-1zm-1 -1h1v1h-1zm-1 -1h1v1h-1zm-1 -1h1v1h-1zm-1 -1h1v1h-1zm-1 -1h1v1h-1zm-1 -1h1v1h-1zm-1 -1h1v1h-1zm-1 -1h1v1h-1zm-1 -1h1v1h-1zm-1 -1h1v1h-1zm-1 -1h1v1h-1zm-1 -1h1v1h-1zm-1 -1h1v1h-1zm-1 -1h1v1h-1zm-1 -1h1v1h-1zm-1 -1h1v1h-1zm-1 -1h1v1h-1zm-1 -1h1v1h-1zm-1 -1h1v1h-1zm-1 -1h1v1h-1zm-1 -1h1v1h-1zm-1 -1h1v1h-1zm-1 -1h1v1h-1zm-1 -1h1v1h-1zm-1 -1h1v1h-1zm-1 -1h1v1h-1zm-1 -1h1v1h-1zm-1 -1h1v1h-1zm-1 -1h1v1h-1zm-1 -1h1v1h-1zm-1 -1h1v1h-1zm-1 -1h1v1h-1zm-1 -1h1v1h-1zm-1 -1h1v1h-1zm-1 -1h1v1h-1zm-1 -1h1v1h-1zm-1 -1h1v1h-1zm-1 -1h1v1h-1zm-1 -1h1v1h-1zm-1 -1h1v1h-1zm-1 -1h1v1h-1zm-1 -1h1v1h-1zm-1 -1h1v1h-1zm-1 -1h1v1h-1zm-1 -1h1v1h-1zm-1 -1h1v1h-1zm-1 -1h1v1h-1zm-1 -1h1v1h-1zm-1 -1h1v1h-1zm-1 -1h1v1h-1zm-1 -1h1v1h-1zm-1 -1h1v1h-1zm-1 -1h1v1h-1zm-1 -1h1v1h-1zm-1 -1h1v1h-1zm-1 -1h1v1h-1zm-1 -1h1v1h-1zm-1 -1h1v1h-1zm-1 -1h1v1h-1zm-1 -1h1v1h-1zm-1 -1h1v1h-1zm-1 -1h1v1h-1zm-1 -1h1v1h-1zm-1 -1h1v1h-1z"/>
<path fill="#000" d="M44 95h7v7h-7zM44 1124h7v7h-7zM1073 95h7v7h-7zM1073 1124h7v7h-7zM172 223h7v7h-7zM172 995h7v7h-7zM944 223h7v7h-7zM944 995h7v7h-7zM301 352h7v7h-7zM301 866h7v7h-7zM815 352h7v7h-7zM815 866h7v7h-7zM429 480h7v7h-7zM429 738h7v7h-7zM687 480h7v7h-7zM687 738h7v7h-7z"/>
<rect x="866" y="1132" width="249" height="19" fill="url(#chk)"/>
<rect x="850" y="1132" width="16" height="19" fill="#404040"/>
<rect x="850" y="1132" width="15" height="18" fill="#e3e3e3"/>
<rect x="851" y="1133" width="14" height="17" fill="#909090"/>
<rect x="851" y="1133" width="13" height="16" fill="#fff"/>
<rect x="852" y="1134" width="12" height="15" fill="#e3e3e3"/>
<path fill="#000" d="M858 1137h1v7h-1zM857 1138h1v5h-1zM856 1139h1v3h-1zM855 1140h1v1h-1z"/>
<rect x="17" y="1151" width="1098" height="1" fill="#e8e8e8"/>
<rect x="0" y="1151" width="17" height="1" fill="#e8e8e8"/>
<rect x="0" y="1152" width="1115" height="1" fill="#fff"/>
<rect x="0" y="1153" width="1115" height="13" fill="#e3e3e3"/>
</svg>
<div class="txt">
<div class="rl" style="left:38px">0</div>
<div class="rl" style="left:166px">1</div>
<div class="rl" style="left:295px">2</div>
<div class="rl" style="left:423px">3</div>
<div class="rl" style="left:552px">4</div>
<div class="rl" style="left:681px">5</div>
<div class="rl" style="left:809px">6</div>
<div class="rl" style="left:938px">7</div>
<div class="rl" style="left:1067px">8</div>
<div class="t" style="left:0.4px;top:34px;letter-spacing:0.4px;">Block Width:</div>
<div class="t" style="left:0.4px;top:49px;letter-spacing:0.4px;">Block Height:</div>
<div class="in" style="left:74px;top:34px;width:45px;padding-right:4px">8.000</div>
<div class="in" style="left:74px;top:49px;width:45px;padding-right:4px">8.000</div>
<div class="t" style="left:126.3px;top:34px;letter-spacing:0.3px;">Snaps Horizontal:</div>
<div class="t" style="left:126.3px;top:49px;letter-spacing:0.37px;">Snaps Vertical:</div>
<div class="in" style="left:219px;top:34px;width:26px;padding-right:3px">32</div>
<div class="in" style="left:219px;top:49px;width:26px;padding-right:3px">32</div>
<div class="sep" style="left:252px"></div><div class="seph" style="left:253px"></div>
<div class="t c" style="left:255px;top:34px;width:80px;line-height:13.4px;">Graph Paper<br>Cells:</div>
<div class="btn" style="left:333px"></div>
<div class="t r" style="left:340.6px;top:34px;width:80px;">Horizontal</div>
<div class="t r" style="left:340.6px;top:49px;width:80px;">Vertical</div>
<div class="in" style="left:423px;top:34px;width:26px;padding-right:3px">32</div>
<div class="in" style="left:423px;top:49px;width:26px;padding-right:3px">32</div>
<div class="sep" style="left:458px"></div><div class="seph" style="left:459px"></div>
<div class="t c" style="left:447.5px;top:36px;width:80px;line-height:13.2px;letter-spacing:0.17px;">Snapping<br>Options:</div>
<div class="btn" style="left:519px"></div>
</div>
<div class="sep" style="left:617px"></div><div class="seph" style="left:618px"></div>
<div class="sep" style="left:692px"></div><div class="seph" style="left:693px"></div>
<svg class="ic" width="1115" height="70" viewBox="0 0 1115 70">
<g><rect x="337.5" y="38.5" width="21" height="21" fill="#fff" stroke="#636363" stroke-width="1"/><path d="M344.5 39V59M351.5 39V59M338 52.5H358" stroke="#8c8c8c" stroke-width="1" fill="none"/><path d="M338 45H358" stroke="#8c8c8c" stroke-width="1.35" fill="none"/></g>
<rect x="525" y="40.7" width="3.4" height="3.3" fill="#5e5e5e"/>
<rect x="538.2" y="40" width="4.7" height="4.7" fill="#ee3b4b"/>
<rect x="539.1" y="54.7" width="3.4" height="3.2" fill="#5e5e5e"/>
<g transform="translate(0,0)"><path d="M523.2 59.5L528.6 54.1" stroke="#5b5b5b" stroke-width="1.3" stroke-linecap="round" fill="none"/><path d="M528.5 54.6L534.4 48.7" stroke="#1f74bf" stroke-width="2.9" fill="none"/><path d="M531.0 46.0H537.3V52.0Z" fill="#1f74bf"/></g>
<path d="M557.3 42.7H570M572.6 45.5V58.7" stroke="#63666a" stroke-width="1.3" stroke-linecap="round" fill="none"/>
<rect x="570.3" y="40.4" width="4.9" height="4.9" fill="#fff" stroke="#e8394a" stroke-width="1.25"/>
<g transform="translate(32,0)"><path d="M523.2 59.5L528.6 54.1" stroke="#5b5b5b" stroke-width="1.3" stroke-linecap="round" fill="none"/><path d="M528.5 54.6L534.4 48.7" stroke="#1f74bf" stroke-width="2.9" fill="none"/><path d="M531.0 46.0H537.3V52.0Z" fill="#1f74bf"/></g>
<path d="M589.29 42.22A11.1 11.1 0 0 1 605.15 57.73" stroke="#6a6d70" stroke-width="1.3" stroke-linecap="round" fill="none"/>
<path d="M604.5 39.7L607.3 42.5L604.5 45.3L601.7 42.5Z" fill="#ea3a4c"/>
<g transform="translate(64,0)"><path d="M523.2 59.5L528.6 54.1" stroke="#5b5b5b" stroke-width="1.3" stroke-linecap="round" fill="none"/><path d="M528.5 54.6L534.4 48.7" stroke="#1f74bf" stroke-width="2.9" fill="none"/><path d="M531.0 46.0H537.3V52.0Z" fill="#1f74bf"/></g>
<path d="M628.9 42.15H635.6M632.1 38.9V45.6" stroke="#35b04a" stroke-width="2" stroke-linecap="round" fill="none"/>
<rect x="637.90" y="37.80" width="2.20" height="2.20" fill="#30a9e1"/><rect x="637.90" y="41.13" width="2.20" height="2.20" fill="#30a9e1"/><rect x="637.90" y="44.46" width="2.20" height="2.20" fill="#30a9e1"/><rect x="637.90" y="51.12" width="2.20" height="2.20" fill="#30a9e1"/><rect x="637.90" y="54.45" width="2.20" height="2.20" fill="#30a9e1"/><rect x="637.90" y="57.78" width="2.20" height="2.20" fill="#30a9e1"/><rect x="628.00" y="47.80" width="2.20" height="2.20" fill="#30a9e1"/><rect x="631.33" y="47.80" width="2.20" height="2.20" fill="#30a9e1"/><rect x="634.66" y="47.80" width="2.20" height="2.20" fill="#30a9e1"/><rect x="637.99" y="47.80" width="2.20" height="2.20" fill="#1f9ddb"/><rect x="641.32" y="47.80" width="2.20" height="2.20" fill="#30a9e1"/><rect x="644.65" y="47.80" width="2.20" height="2.20" fill="#30a9e1"/><rect x="647.98" y="47.80" width="2.20" height="2.20" fill="#30a9e1"/>
<text x="660.6" y="45.9" font-family="Liberation Sans, sans-serif" font-size="11" fill="#999" stroke="#999" stroke-width="0.55" textLength="6.6" lengthAdjust="spacingAndGlyphs">X</text>
<rect x="669.90" y="37.80" width="2.20" height="2.20" fill="#c4c4c4"/><rect x="669.90" y="41.13" width="2.20" height="2.20" fill="#c4c4c4"/><rect x="669.90" y="44.46" width="2.20" height="2.20" fill="#c4c4c4"/><rect x="669.90" y="51.12" width="2.20" height="2.20" fill="#c4c4c4"/><rect x="669.90" y="54.45" width="2.20" height="2.20" fill="#c4c4c4"/><rect x="669.90" y="57.78" width="2.20" height="2.20" fill="#c4c4c4"/><rect x="660.00" y="47.80" width="2.20" height="2.20" fill="#c4c4c4"/><rect x="663.33" y="47.80" width="2.20" height="2.20" fill="#c4c4c4"/><rect x="666.66" y="47.80" width="2.20" height="2.20" fill="#c4c4c4"/><rect x="669.99" y="47.80" width="2.20" height="2.20" fill="#a4a4a4"/><rect x="673.32" y="47.80" width="2.20" height="2.20" fill="#c4c4c4"/><rect x="676.65" y="47.80" width="2.20" height="2.20" fill="#c4c4c4"/><rect x="679.98" y="47.80" width="2.20" height="2.20" fill="#c4c4c4"/>
<rect x="711.9" y="57.6" width="3.4" height="2.2" fill="#8b4a22"/>
<path d="M713.5 37.8L718.9 43.9H715.8L721.2 50.8H717.9L724.1 57.9H703.0L709.1 50.8H705.7L711.3 43.9H708.4Z" fill="#76a82c"/>
<path d="M716.8 48.6L720.3 52.1L715.5 53.5Z" fill="#fbd898"/>
<path d="M724.6 39.9L724.9 47.7L720.3 52.1L716.8 48.6Z" fill="#f3922f"/>
<path d="M715.3 53.7L715.7 52.1L717.0 53.2Z" fill="#5e5e5e" stroke="#5e5e5e" stroke-width="0.5"/>
</svg>
</body></html>
